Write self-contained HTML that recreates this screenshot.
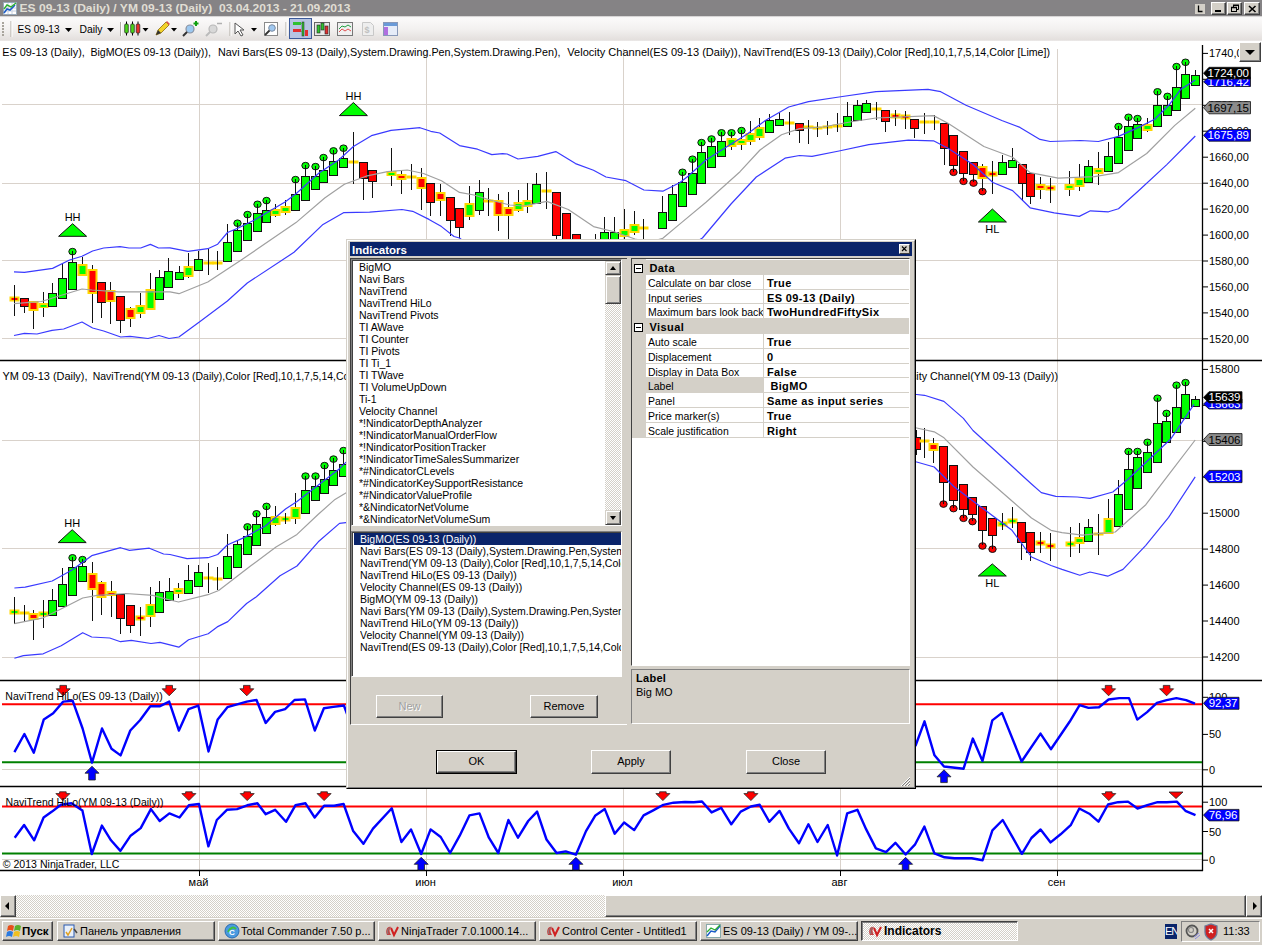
<!DOCTYPE html>
<html><head><meta charset="utf-8">
<style>
*{box-sizing:border-box;margin:0;padding:0}
html,body{width:1262px;height:945px;overflow:hidden;background:#fff;font-family:"Liberation Sans",sans-serif;font-size:11px;color:#000}
.abs{position:absolute}
#title{left:0;top:0;width:1262px;height:16px;background:#858385}
#title .t{left:19px;top:1px;font-weight:bold;font-size:11.5px;color:#e2e0d6;white-space:nowrap;letter-spacing:0.1px}
.wbtn{background:#d4d0c8;border:1px solid;border-color:#fff #404040 #404040 #fff;box-shadow:inset -1px -1px #808080}
#tool{left:0;top:16px;width:1262px;height:25px;background:linear-gradient(#b8b6b6 0,#f6f5f5 1px,#fbfafa 8%,#f2f0ef 55%,#e3dfdd 96%,#f0eeee 100%)}
.sep{width:1px;background:#b8b4ac;height:14px;top:6px}
.dd{width:0;height:0;border-left:3px solid transparent;border-right:3px solid transparent;border-top:3px solid #000}
#dlg{left:346px;top:239px;width:570px;height:550px;background:#d4d0c8;border:1px solid;border-color:#d4d0c8 #000 #000 #d4d0c8}
#dlg .in{position:absolute;left:0;top:0;right:0;bottom:0;border:1px solid;border-color:#fff #808080 #808080 #fff}
.list{background:#fff;border:2px solid;border-color:#808080 #fff #fff #808080;box-shadow:inset 1px 1px #404040}
.li{position:absolute;left:5px;white-space:nowrap;font-size:11px;line-height:12px;height:12px}
.btn{position:absolute;background:#d4d0c8;border:1px solid;border-color:#fff #404040 #404040 #fff;box-shadow:inset -1px -1px #808080;text-align:center;font-size:11px;line-height:20px}
.pg{font-size:11px}
.row{position:absolute;left:15px;width:262px;height:15px;border-bottom:1px solid #d4d0c8;background:#fff}
.row .n{position:absolute;left:2px;top:1px;white-space:nowrap;overflow:hidden;width:114px}
.row .v{position:absolute;left:117px;top:0;height:14px;width:146px;border-left:1px solid #d4d0c8;padding-left:4px;padding-top:1px;font-weight:bold;white-space:nowrap}
.cat{position:absolute;left:0;width:278px;height:15px;background:#d4d0c8;font-weight:bold}
.minus{position:absolute;left:3px;top:3px;width:9px;height:9px;border:1px solid #000;background:#fff}
.minus:after{content:"";position:absolute;left:1px;top:3px;width:5px;height:1px;background:#000}
#scroll{left:0;top:895px;width:1262px;height:22px;background-color:#eeece8;background-image:repeating-conic-gradient(#d4d0c8 0 25%, #fff 0 50%);background-size:2px 2px}
#task{left:0;top:917px;width:1262px;height:28px;background:#d4d0c8}
.tb{position:absolute;top:4px;height:20px;background:#d4d0c8;border:1px solid;border-color:#fff #404040 #404040 #fff;box-shadow:inset -1px -1px #808080;white-space:nowrap;overflow:hidden;font-size:11px;line-height:18px;padding-left:22px}
</style></head><body>
<svg width="1262" height="945" viewBox="0 0 1262 945" style="position:absolute;left:0;top:0">
<line x1="2" y1="104.5" x2="1202" y2="104.5" stroke="#d9d2cb" stroke-width="1"/>
<line x1="2" y1="183.5" x2="1202" y2="183.5" stroke="#d9d2cb" stroke-width="1"/>
<line x1="2" y1="260.5" x2="1202" y2="260.5" stroke="#d9d2cb" stroke-width="1"/>
<line x1="2" y1="338.5" x2="1202" y2="338.5" stroke="#d9d2cb" stroke-width="1"/>
<line x1="2" y1="440.5" x2="1202" y2="440.5" stroke="#d9d2cb" stroke-width="1"/>
<line x1="2" y1="548.5" x2="1202" y2="548.5" stroke="#d9d2cb" stroke-width="1"/>
<line x1="2" y1="657.5" x2="1202" y2="657.5" stroke="#d9d2cb" stroke-width="1"/>
<line x1="2" y1="769.5" x2="1202" y2="769.5" stroke="#d9d2cb" stroke-width="1"/>
<line x1="2" y1="859.5" x2="1202" y2="859.5" stroke="#d9d2cb" stroke-width="1"/>
<line x1="199.5" y1="49" x2="199.5" y2="870" stroke="#d9d2cb" stroke-width="1"/>
<line x1="426.5" y1="49" x2="426.5" y2="870" stroke="#d9d2cb" stroke-width="1"/>
<line x1="623.5" y1="49" x2="623.5" y2="870" stroke="#d9d2cb" stroke-width="1"/>
<line x1="840.5" y1="49" x2="840.5" y2="870" stroke="#d9d2cb" stroke-width="1"/>
<line x1="1057.5" y1="49" x2="1057.5" y2="870" stroke="#d9d2cb" stroke-width="1"/>
<line x1="0" y1="360.5" x2="1262" y2="360.5" stroke="#000" stroke-width="1.3"/>
<line x1="0" y1="680.5" x2="1262" y2="680.5" stroke="#000" stroke-width="1.3"/>
<line x1="0" y1="786.5" x2="1262" y2="786.5" stroke="#000" stroke-width="1.3"/>
<line x1="0" y1="870.5" x2="1203" y2="870.5" stroke="#000" stroke-width="1.3"/>
<line x1="1202.5" y1="45" x2="1202.5" y2="871" stroke="#000" stroke-width="1.3"/>
<line x1="199.5" y1="870" x2="199.5" y2="876" stroke="#000" stroke-width="1"/>
<text x="198.5" y="886" text-anchor="middle" font-size="11" font-family="Liberation Sans, sans-serif">май</text>
<line x1="426.5" y1="870" x2="426.5" y2="876" stroke="#000" stroke-width="1"/>
<text x="425.5" y="886" text-anchor="middle" font-size="11" font-family="Liberation Sans, sans-serif">июн</text>
<line x1="623.5" y1="870" x2="623.5" y2="876" stroke="#000" stroke-width="1"/>
<text x="622.5" y="886" text-anchor="middle" font-size="11" font-family="Liberation Sans, sans-serif">июл</text>
<line x1="840.5" y1="870" x2="840.5" y2="876" stroke="#000" stroke-width="1"/>
<text x="839.5" y="886" text-anchor="middle" font-size="11" font-family="Liberation Sans, sans-serif">авг</text>
<line x1="1057.5" y1="870" x2="1057.5" y2="876" stroke="#000" stroke-width="1"/>
<text x="1056.5" y="886" text-anchor="middle" font-size="11" font-family="Liberation Sans, sans-serif">сен</text>
<line x1="1203" y1="53.4" x2="1208" y2="53.4" stroke="#000" stroke-width="1"/>
<text x="1209" y="57.4" font-size="11" font-family="Liberation Sans, sans-serif">1740,00</text>
<line x1="1203" y1="79.3" x2="1208" y2="79.3" stroke="#000" stroke-width="1"/>
<text x="1209" y="83.3" font-size="11" font-family="Liberation Sans, sans-serif">1720,00</text>
<line x1="1203" y1="105.3" x2="1208" y2="105.3" stroke="#000" stroke-width="1"/>
<text x="1209" y="109.3" font-size="11" font-family="Liberation Sans, sans-serif">1700,00</text>
<line x1="1203" y1="131.2" x2="1208" y2="131.2" stroke="#000" stroke-width="1"/>
<text x="1209" y="135.2" font-size="11" font-family="Liberation Sans, sans-serif">1680,00</text>
<line x1="1203" y1="157.2" x2="1208" y2="157.2" stroke="#000" stroke-width="1"/>
<text x="1209" y="161.2" font-size="11" font-family="Liberation Sans, sans-serif">1660,00</text>
<line x1="1203" y1="183.2" x2="1208" y2="183.2" stroke="#000" stroke-width="1"/>
<text x="1209" y="187.2" font-size="11" font-family="Liberation Sans, sans-serif">1640,00</text>
<line x1="1203" y1="209.1" x2="1208" y2="209.1" stroke="#000" stroke-width="1"/>
<text x="1209" y="213.1" font-size="11" font-family="Liberation Sans, sans-serif">1620,00</text>
<line x1="1203" y1="235.1" x2="1208" y2="235.1" stroke="#000" stroke-width="1"/>
<text x="1209" y="239.1" font-size="11" font-family="Liberation Sans, sans-serif">1600,00</text>
<line x1="1203" y1="261.0" x2="1208" y2="261.0" stroke="#000" stroke-width="1"/>
<text x="1209" y="265.0" font-size="11" font-family="Liberation Sans, sans-serif">1580,00</text>
<line x1="1203" y1="286.9" x2="1208" y2="286.9" stroke="#000" stroke-width="1"/>
<text x="1209" y="290.9" font-size="11" font-family="Liberation Sans, sans-serif">1560,00</text>
<line x1="1203" y1="312.9" x2="1208" y2="312.9" stroke="#000" stroke-width="1"/>
<text x="1209" y="316.9" font-size="11" font-family="Liberation Sans, sans-serif">1540,00</text>
<line x1="1203" y1="338.8" x2="1208" y2="338.8" stroke="#000" stroke-width="1"/>
<text x="1209" y="342.8" font-size="11" font-family="Liberation Sans, sans-serif">1520,00</text>
<line x1="1203" y1="369.4" x2="1208" y2="369.4" stroke="#000" stroke-width="1"/>
<text x="1209" y="373.4" font-size="11" font-family="Liberation Sans, sans-serif">15800</text>
<line x1="1203" y1="405.3" x2="1208" y2="405.3" stroke="#000" stroke-width="1"/>
<text x="1209" y="409.3" font-size="11" font-family="Liberation Sans, sans-serif">15600</text>
<line x1="1203" y1="441.3" x2="1208" y2="441.3" stroke="#000" stroke-width="1"/>
<text x="1209" y="445.3" font-size="11" font-family="Liberation Sans, sans-serif">15400</text>
<line x1="1203" y1="477.2" x2="1208" y2="477.2" stroke="#000" stroke-width="1"/>
<text x="1209" y="481.2" font-size="11" font-family="Liberation Sans, sans-serif">15200</text>
<line x1="1203" y1="513.2" x2="1208" y2="513.2" stroke="#000" stroke-width="1"/>
<text x="1209" y="517.2" font-size="11" font-family="Liberation Sans, sans-serif">15000</text>
<line x1="1203" y1="549.1" x2="1208" y2="549.1" stroke="#000" stroke-width="1"/>
<text x="1209" y="553.1" font-size="11" font-family="Liberation Sans, sans-serif">14800</text>
<line x1="1203" y1="585.1" x2="1208" y2="585.1" stroke="#000" stroke-width="1"/>
<text x="1209" y="589.1" font-size="11" font-family="Liberation Sans, sans-serif">14600</text>
<line x1="1203" y1="621.0" x2="1208" y2="621.0" stroke="#000" stroke-width="1"/>
<text x="1209" y="625.0" font-size="11" font-family="Liberation Sans, sans-serif">14400</text>
<line x1="1203" y1="657.0" x2="1208" y2="657.0" stroke="#000" stroke-width="1"/>
<text x="1209" y="661.0" font-size="11" font-family="Liberation Sans, sans-serif">14200</text>
<line x1="1203" y1="697.3" x2="1208" y2="697.3" stroke="#000" stroke-width="1"/>
<text x="1209" y="701.3" font-size="11" font-family="Liberation Sans, sans-serif">100</text>
<line x1="1203" y1="734.4" x2="1208" y2="734.4" stroke="#000" stroke-width="1"/>
<text x="1209" y="738.4" font-size="11" font-family="Liberation Sans, sans-serif">50</text>
<line x1="1203" y1="769.8" x2="1208" y2="769.8" stroke="#000" stroke-width="1"/>
<text x="1209" y="773.8" font-size="11" font-family="Liberation Sans, sans-serif">0</text>
<line x1="1203" y1="802.2" x2="1208" y2="802.2" stroke="#000" stroke-width="1"/>
<text x="1209" y="806.2" font-size="11" font-family="Liberation Sans, sans-serif">100</text>
<line x1="1203" y1="831.5" x2="1208" y2="831.5" stroke="#000" stroke-width="1"/>
<text x="1209" y="835.5" font-size="11" font-family="Liberation Sans, sans-serif">50</text>
<line x1="1203" y1="860.2" x2="1208" y2="860.2" stroke="#000" stroke-width="1"/>
<text x="1209" y="864.2" font-size="11" font-family="Liberation Sans, sans-serif">0</text>
<rect x="9.5" y="296.5" width="10" height="5" fill="#ffd700"/>
<rect x="11.5" y="298" width="6" height="2" fill="#ff0000"/>
<line x1="14.5" y1="285" x2="14.5" y2="316" stroke="#111" stroke-width="1"/>
<line x1="24.5" y1="298" x2="24.5" y2="313" stroke="#111" stroke-width="1"/>
<rect x="20.5" y="298.5" width="8" height="8" fill="#ff0000" stroke="#111" stroke-width="1"/>
<line x1="33.5" y1="302" x2="33.5" y2="329" stroke="#111" stroke-width="1"/>
<rect x="28.5" y="301" width="10" height="10" fill="#ffd700"/>
<rect x="30.5" y="303" width="6" height="6" fill="#ff0000"/>
<line x1="43.5" y1="292" x2="43.5" y2="317" stroke="#111" stroke-width="1"/>
<rect x="38.5" y="303" width="10" height="5" fill="#ffd700"/>
<rect x="40.5" y="305" width="6" height="2" fill="#00ff00"/>
<line x1="52.5" y1="283" x2="52.5" y2="306" stroke="#111" stroke-width="1"/>
<rect x="48.5" y="293.5" width="8" height="13" fill="#00ff00" stroke="#111" stroke-width="1"/>
<line x1="62.5" y1="264" x2="62.5" y2="298" stroke="#111" stroke-width="1"/>
<rect x="58.5" y="278.5" width="8" height="20" fill="#00ff00" stroke="#111" stroke-width="1"/>
<ellipse cx="72.5" cy="251.6" rx="3.7" ry="3.3" fill="#00ff00" stroke="#111" stroke-width="1"/>
<line x1="72.5" y1="251" x2="72.5" y2="289" stroke="#111" stroke-width="1"/>
<rect x="68.5" y="262.5" width="8" height="27" fill="#00ff00" stroke="#111" stroke-width="1"/>
<line x1="82.5" y1="257" x2="82.5" y2="275" stroke="#111" stroke-width="1"/>
<rect x="77.5" y="264" width="10" height="12" fill="#ffd700"/>
<rect x="79.5" y="266" width="6" height="8" fill="#00ff00"/>
<line x1="92.5" y1="265" x2="92.5" y2="323" stroke="#111" stroke-width="1"/>
<rect x="87.5" y="269" width="10" height="25" fill="#ffd700"/>
<rect x="89.5" y="271" width="6" height="21" fill="#ff0000"/>
<line x1="101.5" y1="282" x2="101.5" y2="318" stroke="#111" stroke-width="1"/>
<rect x="97.5" y="282.5" width="8" height="20" fill="#ff0000" stroke="#111" stroke-width="1"/>
<line x1="110.5" y1="282" x2="110.5" y2="324" stroke="#111" stroke-width="1"/>
<rect x="105.5" y="290" width="10" height="12" fill="#ffd700"/>
<rect x="107.5" y="292" width="6" height="8" fill="#ff0000"/>
<line x1="120.5" y1="296" x2="120.5" y2="333" stroke="#111" stroke-width="1"/>
<rect x="116.5" y="296.5" width="8" height="24" fill="#ff0000" stroke="#111" stroke-width="1"/>
<line x1="130.5" y1="307" x2="130.5" y2="327" stroke="#111" stroke-width="1"/>
<rect x="125.5" y="308" width="10" height="11" fill="#ffd700"/>
<rect x="127.5" y="310" width="6" height="7" fill="#ff0000"/>
<line x1="140.5" y1="293" x2="140.5" y2="318" stroke="#111" stroke-width="1"/>
<rect x="135.5" y="305" width="10" height="9" fill="#ffd700"/>
<rect x="137.5" y="307" width="6" height="5" fill="#00ff00"/>
<line x1="150.5" y1="273" x2="150.5" y2="309" stroke="#111" stroke-width="1"/>
<rect x="145.5" y="289" width="10" height="21" fill="#ffd700"/>
<rect x="147.5" y="291" width="6" height="17" fill="#00ff00"/>
<line x1="159.5" y1="270" x2="159.5" y2="299" stroke="#111" stroke-width="1"/>
<rect x="155.5" y="277.5" width="8" height="22" fill="#00ff00" stroke="#111" stroke-width="1"/>
<line x1="168.5" y1="258" x2="168.5" y2="287" stroke="#111" stroke-width="1"/>
<rect x="164.5" y="271.5" width="8" height="16" fill="#00ff00" stroke="#111" stroke-width="1"/>
<line x1="179.5" y1="266" x2="179.5" y2="279" stroke="#111" stroke-width="1"/>
<rect x="175.5" y="272.5" width="8" height="7" fill="#00ff00" stroke="#111" stroke-width="1"/>
<line x1="188.5" y1="253" x2="188.5" y2="278" stroke="#111" stroke-width="1"/>
<rect x="183.5" y="266" width="10" height="11" fill="#ffd700"/>
<rect x="185.5" y="268" width="6" height="7" fill="#00ff00"/>
<line x1="198.5" y1="251" x2="198.5" y2="270" stroke="#111" stroke-width="1"/>
<rect x="194.5" y="259.5" width="8" height="11" fill="#00ff00" stroke="#111" stroke-width="1"/>
<rect x="203.5" y="261.5" width="10" height="3" fill="#ffd700"/>
<line x1="208.5" y1="249" x2="208.5" y2="275" stroke="#111" stroke-width="1"/>
<rect x="212.5" y="261.5" width="10" height="3" fill="#ffd700"/>
<line x1="217.5" y1="251" x2="217.5" y2="270" stroke="#111" stroke-width="1"/>
<line x1="227.5" y1="224" x2="227.5" y2="261" stroke="#111" stroke-width="1"/>
<rect x="223.5" y="242.5" width="8" height="19" fill="#00ff00" stroke="#111" stroke-width="1"/>
<ellipse cx="237.5" cy="223.2" rx="3.7" ry="3.3" fill="#00ff00" stroke="#111" stroke-width="1"/>
<line x1="237.5" y1="223" x2="237.5" y2="251" stroke="#111" stroke-width="1"/>
<rect x="233.5" y="230.5" width="8" height="21" fill="#00ff00" stroke="#111" stroke-width="1"/>
<ellipse cx="247.5" cy="214.6" rx="3.7" ry="3.3" fill="#00ff00" stroke="#111" stroke-width="1"/>
<line x1="247.5" y1="214" x2="247.5" y2="240" stroke="#111" stroke-width="1"/>
<rect x="243.5" y="223.5" width="8" height="17" fill="#00ff00" stroke="#111" stroke-width="1"/>
<ellipse cx="257.5" cy="204.3" rx="3.7" ry="3.3" fill="#00ff00" stroke="#111" stroke-width="1"/>
<line x1="257.5" y1="204" x2="257.5" y2="231" stroke="#111" stroke-width="1"/>
<rect x="253.5" y="213.5" width="8" height="18" fill="#00ff00" stroke="#111" stroke-width="1"/>
<ellipse cx="266.5" cy="200.6" rx="3.7" ry="3.3" fill="#00ff00" stroke="#111" stroke-width="1"/>
<line x1="266.5" y1="200" x2="266.5" y2="222" stroke="#111" stroke-width="1"/>
<rect x="262.5" y="210.5" width="8" height="12" fill="#00ff00" stroke="#111" stroke-width="1"/>
<line x1="275.5" y1="204" x2="275.5" y2="217" stroke="#111" stroke-width="1"/>
<rect x="270.5" y="209" width="10" height="7" fill="#ffd700"/>
<rect x="272.5" y="211" width="6" height="3" fill="#00ff00"/>
<line x1="285.5" y1="200" x2="285.5" y2="215" stroke="#111" stroke-width="1"/>
<rect x="280.5" y="206" width="10" height="7" fill="#ffd700"/>
<rect x="282.5" y="208" width="6" height="3" fill="#00ff00"/>
<ellipse cx="295.5" cy="179.6" rx="3.7" ry="3.3" fill="#00ff00" stroke="#111" stroke-width="1"/>
<line x1="295.5" y1="179" x2="295.5" y2="210" stroke="#111" stroke-width="1"/>
<rect x="291.5" y="194.5" width="8" height="16" fill="#00ff00" stroke="#111" stroke-width="1"/>
<ellipse cx="305.5" cy="165.6" rx="3.7" ry="3.3" fill="#00ff00" stroke="#111" stroke-width="1"/>
<line x1="305.5" y1="165" x2="305.5" y2="200" stroke="#111" stroke-width="1"/>
<rect x="301.5" y="176.5" width="8" height="24" fill="#00ff00" stroke="#111" stroke-width="1"/>
<ellipse cx="315.5" cy="166.6" rx="3.7" ry="3.3" fill="#00ff00" stroke="#111" stroke-width="1"/>
<line x1="315.5" y1="166" x2="315.5" y2="189" stroke="#111" stroke-width="1"/>
<rect x="311.5" y="176.5" width="8" height="13" fill="#00ff00" stroke="#111" stroke-width="1"/>
<ellipse cx="323.5" cy="157.6" rx="3.7" ry="3.3" fill="#00ff00" stroke="#111" stroke-width="1"/>
<line x1="323.5" y1="157" x2="323.5" y2="182" stroke="#111" stroke-width="1"/>
<rect x="319.5" y="170.5" width="8" height="12" fill="#00ff00" stroke="#111" stroke-width="1"/>
<ellipse cx="333.5" cy="150.9" rx="3.7" ry="3.3" fill="#00ff00" stroke="#111" stroke-width="1"/>
<line x1="333.5" y1="150" x2="333.5" y2="175" stroke="#111" stroke-width="1"/>
<rect x="329.5" y="161.5" width="8" height="14" fill="#00ff00" stroke="#111" stroke-width="1"/>
<ellipse cx="343.5" cy="148.2" rx="3.7" ry="3.3" fill="#00ff00" stroke="#111" stroke-width="1"/>
<line x1="343.5" y1="148" x2="343.5" y2="167" stroke="#111" stroke-width="1"/>
<rect x="339.5" y="158.5" width="8" height="9" fill="#00ff00" stroke="#111" stroke-width="1"/>
<rect x="348.5" y="160.5" width="10" height="3" fill="#ffd700"/>
<line x1="353.5" y1="132" x2="353.5" y2="184" stroke="#111" stroke-width="1"/>
<line x1="363.5" y1="162" x2="363.5" y2="200" stroke="#111" stroke-width="1"/>
<rect x="359.5" y="162.5" width="8" height="16" fill="#ff0000" stroke="#111" stroke-width="1"/>
<line x1="372.5" y1="170" x2="372.5" y2="198" stroke="#111" stroke-width="1"/>
<rect x="368.5" y="170.5" width="8" height="11" fill="#ff0000" stroke="#111" stroke-width="1"/>
<line x1="391.5" y1="148" x2="391.5" y2="186" stroke="#111" stroke-width="1"/>
<rect x="386.5" y="171" width="10" height="5" fill="#ffd700"/>
<rect x="388.5" y="173" width="6" height="2" fill="#00ff00"/>
<line x1="401.5" y1="170" x2="401.5" y2="194" stroke="#111" stroke-width="1"/>
<rect x="396.5" y="174" width="10" height="6" fill="#ffd700"/>
<rect x="398.5" y="176" width="6" height="2" fill="#ff0000"/>
<rect x="406.5" y="175.5" width="10" height="3" fill="#ffd700"/>
<line x1="411.5" y1="164" x2="411.5" y2="190" stroke="#111" stroke-width="1"/>
<line x1="421.5" y1="168" x2="421.5" y2="210" stroke="#111" stroke-width="1"/>
<rect x="416.5" y="177" width="10" height="12" fill="#ffd700"/>
<rect x="418.5" y="179" width="6" height="8" fill="#ff0000"/>
<line x1="430.5" y1="183" x2="430.5" y2="216" stroke="#111" stroke-width="1"/>
<rect x="426.5" y="183.5" width="8" height="19" fill="#ff0000" stroke="#111" stroke-width="1"/>
<line x1="440.5" y1="184" x2="440.5" y2="216" stroke="#111" stroke-width="1"/>
<rect x="435.5" y="192" width="10" height="9" fill="#ffd700"/>
<rect x="437.5" y="194" width="6" height="5" fill="#ff0000"/>
<line x1="450.5" y1="197" x2="450.5" y2="236" stroke="#111" stroke-width="1"/>
<rect x="446.5" y="197.5" width="8" height="23" fill="#ff0000" stroke="#111" stroke-width="1"/>
<line x1="459.5" y1="208" x2="459.5" y2="238" stroke="#111" stroke-width="1"/>
<rect x="455.5" y="208.5" width="8" height="19" fill="#ff0000" stroke="#111" stroke-width="1"/>
<line x1="469.5" y1="186" x2="469.5" y2="220" stroke="#111" stroke-width="1"/>
<rect x="464.5" y="203" width="10" height="14" fill="#ffd700"/>
<rect x="466.5" y="205" width="6" height="10" fill="#00ff00"/>
<line x1="479.5" y1="180" x2="479.5" y2="215" stroke="#111" stroke-width="1"/>
<rect x="475.5" y="192.5" width="8" height="18" fill="#00ff00" stroke="#111" stroke-width="1"/>
<rect x="483.5" y="199.5" width="10" height="3" fill="#ffd700"/>
<line x1="488.5" y1="188" x2="488.5" y2="216" stroke="#111" stroke-width="1"/>
<line x1="498.5" y1="194" x2="498.5" y2="231" stroke="#111" stroke-width="1"/>
<rect x="493.5" y="200" width="10" height="16" fill="#ffd700"/>
<rect x="495.5" y="202" width="6" height="12" fill="#ff0000"/>
<line x1="508.5" y1="192" x2="508.5" y2="239" stroke="#111" stroke-width="1"/>
<rect x="503.5" y="207" width="10" height="9" fill="#ffd700"/>
<rect x="505.5" y="209" width="6" height="5" fill="#ff0000"/>
<line x1="518.5" y1="190" x2="518.5" y2="212" stroke="#111" stroke-width="1"/>
<rect x="513.5" y="202" width="10" height="9" fill="#ffd700"/>
<rect x="515.5" y="204" width="6" height="5" fill="#00ff00"/>
<line x1="527.5" y1="183" x2="527.5" y2="213" stroke="#111" stroke-width="1"/>
<rect x="522.5" y="200" width="10" height="7" fill="#ffd700"/>
<rect x="524.5" y="202" width="6" height="3" fill="#00ff00"/>
<line x1="536.5" y1="173" x2="536.5" y2="203" stroke="#111" stroke-width="1"/>
<rect x="532.5" y="184.5" width="8" height="19" fill="#00ff00" stroke="#111" stroke-width="1"/>
<rect x="541.5" y="189.5" width="10" height="3" fill="#ffd700"/>
<line x1="546.5" y1="172" x2="546.5" y2="209" stroke="#111" stroke-width="1"/>
<line x1="556.5" y1="192" x2="556.5" y2="245" stroke="#111" stroke-width="1"/>
<rect x="552.5" y="192.5" width="8" height="43" fill="#ff0000" stroke="#111" stroke-width="1"/>
<line x1="566.5" y1="213" x2="566.5" y2="260" stroke="#111" stroke-width="1"/>
<rect x="562.5" y="213.5" width="8" height="42" fill="#ff0000" stroke="#111" stroke-width="1"/>
<line x1="576.5" y1="234" x2="576.5" y2="270" stroke="#111" stroke-width="1"/>
<rect x="572.5" y="234.5" width="8" height="28" fill="#ff0000" stroke="#111" stroke-width="1"/>
<line x1="595.5" y1="234" x2="595.5" y2="270" stroke="#111" stroke-width="1"/>
<rect x="591.5" y="245.5" width="8" height="15" fill="#ff0000" stroke="#111" stroke-width="1"/>
<line x1="604.5" y1="217" x2="604.5" y2="250" stroke="#111" stroke-width="1"/>
<rect x="600.5" y="232.5" width="8" height="16" fill="#00ff00" stroke="#111" stroke-width="1"/>
<line x1="614.5" y1="217" x2="614.5" y2="250" stroke="#111" stroke-width="1"/>
<rect x="610.5" y="232.5" width="8" height="16" fill="#00ff00" stroke="#111" stroke-width="1"/>
<line x1="624.5" y1="209" x2="624.5" y2="239" stroke="#111" stroke-width="1"/>
<rect x="619.5" y="229" width="10" height="8" fill="#ffd700"/>
<rect x="621.5" y="231" width="6" height="4" fill="#00ff00"/>
<line x1="634.5" y1="211" x2="634.5" y2="235" stroke="#111" stroke-width="1"/>
<rect x="629.5" y="224" width="10" height="9" fill="#ffd700"/>
<rect x="631.5" y="226" width="6" height="5" fill="#00ff00"/>
<rect x="638.5" y="226.5" width="10" height="3" fill="#ffd700"/>
<line x1="643.5" y1="219" x2="643.5" y2="239" stroke="#111" stroke-width="1"/>
<line x1="662.5" y1="196" x2="662.5" y2="228" stroke="#111" stroke-width="1"/>
<rect x="658.5" y="212.5" width="8" height="16" fill="#00ff00" stroke="#111" stroke-width="1"/>
<line x1="672.5" y1="185" x2="672.5" y2="220" stroke="#111" stroke-width="1"/>
<rect x="668.5" y="194.5" width="8" height="26" fill="#00ff00" stroke="#111" stroke-width="1"/>
<ellipse cx="682.5" cy="172.3" rx="3.7" ry="3.3" fill="#00ff00" stroke="#111" stroke-width="1"/>
<line x1="682.5" y1="172" x2="682.5" y2="206" stroke="#111" stroke-width="1"/>
<rect x="678.5" y="182.5" width="8" height="24" fill="#00ff00" stroke="#111" stroke-width="1"/>
<ellipse cx="692.5" cy="159.2" rx="3.7" ry="3.3" fill="#00ff00" stroke="#111" stroke-width="1"/>
<line x1="692.5" y1="159" x2="692.5" y2="194" stroke="#111" stroke-width="1"/>
<rect x="688.5" y="173.5" width="8" height="21" fill="#00ff00" stroke="#111" stroke-width="1"/>
<ellipse cx="701.5" cy="142.6" rx="3.7" ry="3.3" fill="#00ff00" stroke="#111" stroke-width="1"/>
<line x1="701.5" y1="142" x2="701.5" y2="183" stroke="#111" stroke-width="1"/>
<rect x="697.5" y="152.5" width="8" height="31" fill="#00ff00" stroke="#111" stroke-width="1"/>
<ellipse cx="711.5" cy="139.0" rx="3.7" ry="3.3" fill="#00ff00" stroke="#111" stroke-width="1"/>
<line x1="711.5" y1="138" x2="711.5" y2="167" stroke="#111" stroke-width="1"/>
<rect x="707.5" y="146.5" width="8" height="21" fill="#00ff00" stroke="#111" stroke-width="1"/>
<ellipse cx="721.5" cy="132.8" rx="3.7" ry="3.3" fill="#00ff00" stroke="#111" stroke-width="1"/>
<line x1="721.5" y1="132" x2="721.5" y2="156" stroke="#111" stroke-width="1"/>
<rect x="717.5" y="141.5" width="8" height="15" fill="#00ff00" stroke="#111" stroke-width="1"/>
<ellipse cx="731.5" cy="132.8" rx="3.7" ry="3.3" fill="#00ff00" stroke="#111" stroke-width="1"/>
<line x1="731.5" y1="132" x2="731.5" y2="150" stroke="#111" stroke-width="1"/>
<rect x="726.5" y="138" width="10" height="9" fill="#ffd700"/>
<rect x="728.5" y="140" width="6" height="5" fill="#00ff00"/>
<ellipse cx="741.5" cy="130.6" rx="3.7" ry="3.3" fill="#00ff00" stroke="#111" stroke-width="1"/>
<line x1="741.5" y1="130" x2="741.5" y2="150" stroke="#111" stroke-width="1"/>
<rect x="736.5" y="139" width="10" height="6" fill="#ffd700"/>
<rect x="738.5" y="141" width="6" height="2" fill="#00ff00"/>
<line x1="750.5" y1="121" x2="750.5" y2="145" stroke="#111" stroke-width="1"/>
<rect x="745.5" y="133" width="10" height="9" fill="#ffd700"/>
<rect x="747.5" y="135" width="6" height="5" fill="#00ff00"/>
<line x1="759.5" y1="118" x2="759.5" y2="140" stroke="#111" stroke-width="1"/>
<rect x="754.5" y="127" width="10" height="11" fill="#ffd700"/>
<rect x="756.5" y="129" width="6" height="7" fill="#00ff00"/>
<line x1="769.5" y1="114" x2="769.5" y2="132" stroke="#111" stroke-width="1"/>
<rect x="765.5" y="120.5" width="8" height="12" fill="#00ff00" stroke="#111" stroke-width="1"/>
<line x1="779.5" y1="113" x2="779.5" y2="125" stroke="#111" stroke-width="1"/>
<rect x="775.5" y="119.5" width="8" height="6" fill="#00ff00" stroke="#111" stroke-width="1"/>
<rect x="784.5" y="121.5" width="10" height="3" fill="#ffd700"/>
<line x1="789.5" y1="112" x2="789.5" y2="135" stroke="#111" stroke-width="1"/>
<line x1="799.5" y1="123" x2="799.5" y2="143" stroke="#111" stroke-width="1"/>
<rect x="795.5" y="123.5" width="8" height="7" fill="#ff0000" stroke="#111" stroke-width="1"/>
<rect x="803.5" y="125.5" width="10" height="3" fill="#ffd700"/>
<line x1="808.5" y1="120" x2="808.5" y2="144" stroke="#111" stroke-width="1"/>
<rect x="812.5" y="126.5" width="10" height="3" fill="#ffd700"/>
<line x1="817.5" y1="122" x2="817.5" y2="137" stroke="#111" stroke-width="1"/>
<rect x="822.5" y="125.5" width="10" height="3" fill="#ffd700"/>
<line x1="827.5" y1="121" x2="827.5" y2="135" stroke="#111" stroke-width="1"/>
<rect x="832.5" y="124.5" width="10" height="3" fill="#ffd700"/>
<line x1="837.5" y1="113" x2="837.5" y2="132" stroke="#111" stroke-width="1"/>
<line x1="847.5" y1="102" x2="847.5" y2="126" stroke="#111" stroke-width="1"/>
<rect x="843.5" y="116.5" width="8" height="10" fill="#00ff00" stroke="#111" stroke-width="1"/>
<line x1="857.5" y1="100" x2="857.5" y2="120" stroke="#111" stroke-width="1"/>
<rect x="853.5" y="105.5" width="8" height="15" fill="#00ff00" stroke="#111" stroke-width="1"/>
<line x1="866.5" y1="100" x2="866.5" y2="112" stroke="#111" stroke-width="1"/>
<rect x="862.5" y="103.5" width="8" height="9" fill="#00ff00" stroke="#111" stroke-width="1"/>
<rect x="871.5" y="107.5" width="10" height="3" fill="#ffd700"/>
<line x1="876.5" y1="102" x2="876.5" y2="120" stroke="#111" stroke-width="1"/>
<line x1="885.5" y1="110" x2="885.5" y2="132" stroke="#111" stroke-width="1"/>
<rect x="881.5" y="110.5" width="8" height="11" fill="#ff0000" stroke="#111" stroke-width="1"/>
<rect x="890.5" y="113.5" width="10" height="5" fill="#ffd700"/>
<rect x="892.5" y="115" width="6" height="2" fill="#ff0000"/>
<line x1="895.5" y1="110" x2="895.5" y2="126" stroke="#111" stroke-width="1"/>
<rect x="900.5" y="114.5" width="10" height="5" fill="#ffd700"/>
<rect x="902.5" y="116" width="6" height="2" fill="#ff0000"/>
<line x1="905.5" y1="111" x2="905.5" y2="129" stroke="#111" stroke-width="1"/>
<line x1="914.5" y1="119" x2="914.5" y2="138" stroke="#111" stroke-width="1"/>
<rect x="910.5" y="119.5" width="8" height="9" fill="#ff0000" stroke="#111" stroke-width="1"/>
<rect x="919.5" y="120.5" width="10" height="3" fill="#ffd700"/>
<line x1="924.5" y1="113" x2="924.5" y2="134" stroke="#111" stroke-width="1"/>
<rect x="929.5" y="120.5" width="10" height="3" fill="#ffd700"/>
<line x1="934.5" y1="115" x2="934.5" y2="130" stroke="#111" stroke-width="1"/>
<line x1="944.5" y1="123" x2="944.5" y2="165" stroke="#111" stroke-width="1"/>
<rect x="940.5" y="123.5" width="8" height="25" fill="#ff0000" stroke="#111" stroke-width="1"/>
<ellipse cx="953.5" cy="172.3" rx="3.7" ry="3.3" fill="#ff0000" stroke="#111" stroke-width="1"/>
<line x1="953.5" y1="135" x2="953.5" y2="172" stroke="#111" stroke-width="1"/>
<rect x="949.5" y="135.5" width="8" height="30" fill="#ff0000" stroke="#111" stroke-width="1"/>
<ellipse cx="963.5" cy="181.3" rx="3.7" ry="3.3" fill="#ff0000" stroke="#111" stroke-width="1"/>
<line x1="963.5" y1="151" x2="963.5" y2="181" stroke="#111" stroke-width="1"/>
<rect x="959.5" y="151.5" width="8" height="22" fill="#ff0000" stroke="#111" stroke-width="1"/>
<ellipse cx="973.5" cy="183.1" rx="3.7" ry="3.3" fill="#ff0000" stroke="#111" stroke-width="1"/>
<line x1="973.5" y1="162" x2="973.5" y2="182" stroke="#111" stroke-width="1"/>
<rect x="969.5" y="162.5" width="8" height="12" fill="#ff0000" stroke="#111" stroke-width="1"/>
<ellipse cx="982.5" cy="191.6" rx="3.7" ry="3.3" fill="#ff0000" stroke="#111" stroke-width="1"/>
<line x1="982.5" y1="164" x2="982.5" y2="191" stroke="#111" stroke-width="1"/>
<rect x="977.5" y="166" width="10" height="13" fill="#ffd700"/>
<rect x="979.5" y="168" width="6" height="9" fill="#ff0000"/>
<rect x="987.5" y="171.5" width="10" height="5" fill="#ffd700"/>
<rect x="989.5" y="173" width="6" height="2" fill="#ff0000"/>
<line x1="992.5" y1="161" x2="992.5" y2="194" stroke="#111" stroke-width="1"/>
<line x1="1002.5" y1="155" x2="1002.5" y2="174" stroke="#111" stroke-width="1"/>
<rect x="998.5" y="162.5" width="8" height="12" fill="#00ff00" stroke="#111" stroke-width="1"/>
<line x1="1012.5" y1="148" x2="1012.5" y2="167" stroke="#111" stroke-width="1"/>
<rect x="1008.5" y="160.5" width="8" height="7" fill="#00ff00" stroke="#111" stroke-width="1"/>
<line x1="1022.5" y1="164" x2="1022.5" y2="201" stroke="#111" stroke-width="1"/>
<rect x="1018.5" y="164.5" width="8" height="19" fill="#ff0000" stroke="#111" stroke-width="1"/>
<line x1="1030.5" y1="173" x2="1030.5" y2="204" stroke="#111" stroke-width="1"/>
<rect x="1026.5" y="173.5" width="8" height="23" fill="#ff0000" stroke="#111" stroke-width="1"/>
<line x1="1040.5" y1="177" x2="1040.5" y2="199" stroke="#111" stroke-width="1"/>
<rect x="1035.5" y="184" width="10" height="6" fill="#ffd700"/>
<rect x="1037.5" y="186" width="6" height="2" fill="#ff0000"/>
<rect x="1045.5" y="185.5" width="10" height="5" fill="#ffd700"/>
<rect x="1047.5" y="187" width="6" height="2" fill="#ff0000"/>
<line x1="1050.5" y1="178" x2="1050.5" y2="203" stroke="#111" stroke-width="1"/>
<line x1="1069.5" y1="171" x2="1069.5" y2="196" stroke="#111" stroke-width="1"/>
<rect x="1064.5" y="184" width="10" height="6" fill="#ffd700"/>
<rect x="1066.5" y="186" width="6" height="2" fill="#00ff00"/>
<line x1="1079.5" y1="164" x2="1079.5" y2="191" stroke="#111" stroke-width="1"/>
<rect x="1074.5" y="178" width="10" height="9" fill="#ffd700"/>
<rect x="1076.5" y="180" width="6" height="5" fill="#00ff00"/>
<line x1="1088.5" y1="160" x2="1088.5" y2="182" stroke="#111" stroke-width="1"/>
<rect x="1084.5" y="166.5" width="8" height="16" fill="#00ff00" stroke="#111" stroke-width="1"/>
<line x1="1098.5" y1="152" x2="1098.5" y2="185" stroke="#111" stroke-width="1"/>
<rect x="1093.5" y="168" width="10" height="6" fill="#ffd700"/>
<rect x="1095.5" y="170" width="6" height="2" fill="#00ff00"/>
<line x1="1108.5" y1="142" x2="1108.5" y2="171" stroke="#111" stroke-width="1"/>
<rect x="1104.5" y="156.5" width="8" height="15" fill="#00ff00" stroke="#111" stroke-width="1"/>
<ellipse cx="1118.5" cy="126.6" rx="3.7" ry="3.3" fill="#00ff00" stroke="#111" stroke-width="1"/>
<line x1="1118.5" y1="126" x2="1118.5" y2="163" stroke="#111" stroke-width="1"/>
<rect x="1114.5" y="137.5" width="8" height="26" fill="#00ff00" stroke="#111" stroke-width="1"/>
<ellipse cx="1128.5" cy="117.3" rx="3.7" ry="3.3" fill="#00ff00" stroke="#111" stroke-width="1"/>
<line x1="1128.5" y1="117" x2="1128.5" y2="150" stroke="#111" stroke-width="1"/>
<rect x="1124.5" y="126.5" width="8" height="24" fill="#00ff00" stroke="#111" stroke-width="1"/>
<ellipse cx="1137.5" cy="118.6" rx="3.7" ry="3.3" fill="#00ff00" stroke="#111" stroke-width="1"/>
<line x1="1137.5" y1="118" x2="1137.5" y2="138" stroke="#111" stroke-width="1"/>
<rect x="1133.5" y="124.5" width="8" height="14" fill="#00ff00" stroke="#111" stroke-width="1"/>
<line x1="1147.5" y1="118" x2="1147.5" y2="132" stroke="#111" stroke-width="1"/>
<rect x="1142.5" y="124" width="10" height="7" fill="#ffd700"/>
<rect x="1144.5" y="126" width="6" height="3" fill="#00ff00"/>
<ellipse cx="1157.5" cy="91.8" rx="3.7" ry="3.3" fill="#00ff00" stroke="#111" stroke-width="1"/>
<line x1="1157.5" y1="91" x2="1157.5" y2="126" stroke="#111" stroke-width="1"/>
<rect x="1153.5" y="105.5" width="8" height="21" fill="#00ff00" stroke="#111" stroke-width="1"/>
<ellipse cx="1167.5" cy="96.4" rx="3.7" ry="3.3" fill="#00ff00" stroke="#111" stroke-width="1"/>
<line x1="1167.5" y1="96" x2="1167.5" y2="115" stroke="#111" stroke-width="1"/>
<rect x="1163.5" y="105.5" width="8" height="10" fill="#00ff00" stroke="#111" stroke-width="1"/>
<ellipse cx="1176.5" cy="66.6" rx="3.7" ry="3.3" fill="#00ff00" stroke="#111" stroke-width="1"/>
<line x1="1176.5" y1="66" x2="1176.5" y2="110" stroke="#111" stroke-width="1"/>
<rect x="1172.5" y="87.5" width="8" height="23" fill="#00ff00" stroke="#111" stroke-width="1"/>
<ellipse cx="1185.5" cy="62.3" rx="3.7" ry="3.3" fill="#00ff00" stroke="#111" stroke-width="1"/>
<line x1="1185.5" y1="62" x2="1185.5" y2="98" stroke="#111" stroke-width="1"/>
<rect x="1181.5" y="74.5" width="8" height="24" fill="#00ff00" stroke="#111" stroke-width="1"/>
<line x1="1195.5" y1="70" x2="1195.5" y2="85" stroke="#111" stroke-width="1"/>
<rect x="1191.5" y="75.5" width="8" height="10" fill="#00ff00" stroke="#111" stroke-width="1"/>
<rect x="9.5" y="609.5" width="10" height="5" fill="#ffd700"/>
<rect x="11.5" y="611" width="6" height="2" fill="#00ff00"/>
<line x1="14.5" y1="597" x2="14.5" y2="624" stroke="#111" stroke-width="1"/>
<rect x="19.5" y="611.5" width="10" height="3" fill="#ffd700"/>
<line x1="24.5" y1="605" x2="24.5" y2="621" stroke="#111" stroke-width="1"/>
<line x1="33.5" y1="610" x2="33.5" y2="640" stroke="#111" stroke-width="1"/>
<rect x="28.5" y="613" width="10" height="7" fill="#ffd700"/>
<rect x="30.5" y="615" width="6" height="3" fill="#ff0000"/>
<rect x="38.5" y="611.5" width="10" height="5" fill="#ffd700"/>
<rect x="40.5" y="613" width="6" height="2" fill="#00ff00"/>
<line x1="43.5" y1="600" x2="43.5" y2="628" stroke="#111" stroke-width="1"/>
<line x1="52.5" y1="589" x2="52.5" y2="615" stroke="#111" stroke-width="1"/>
<rect x="48.5" y="600.5" width="8" height="15" fill="#00ff00" stroke="#111" stroke-width="1"/>
<line x1="62.5" y1="568" x2="62.5" y2="606" stroke="#111" stroke-width="1"/>
<rect x="58.5" y="584.5" width="8" height="22" fill="#00ff00" stroke="#111" stroke-width="1"/>
<ellipse cx="72.5" cy="557.8" rx="3.7" ry="3.3" fill="#00ff00" stroke="#111" stroke-width="1"/>
<line x1="72.5" y1="557" x2="72.5" y2="595" stroke="#111" stroke-width="1"/>
<rect x="68.5" y="567.5" width="8" height="28" fill="#00ff00" stroke="#111" stroke-width="1"/>
<ellipse cx="82.5" cy="559.6" rx="3.7" ry="3.3" fill="#00ff00" stroke="#111" stroke-width="1"/>
<line x1="82.5" y1="559" x2="82.5" y2="581" stroke="#111" stroke-width="1"/>
<rect x="78.5" y="566.5" width="8" height="15" fill="#00ff00" stroke="#111" stroke-width="1"/>
<line x1="92.5" y1="562" x2="92.5" y2="621" stroke="#111" stroke-width="1"/>
<rect x="87.5" y="573" width="10" height="17" fill="#ffd700"/>
<rect x="89.5" y="575" width="6" height="13" fill="#ff0000"/>
<line x1="101.5" y1="581" x2="101.5" y2="615" stroke="#111" stroke-width="1"/>
<rect x="96.5" y="582" width="10" height="16" fill="#ffd700"/>
<rect x="98.5" y="584" width="6" height="12" fill="#ff0000"/>
<line x1="111.5" y1="581" x2="111.5" y2="617" stroke="#111" stroke-width="1"/>
<rect x="106.5" y="591" width="10" height="5" fill="#ffd700"/>
<rect x="108.5" y="593" width="6" height="2" fill="#ff0000"/>
<line x1="120.5" y1="594" x2="120.5" y2="634" stroke="#111" stroke-width="1"/>
<rect x="116.5" y="594.5" width="8" height="24" fill="#ff0000" stroke="#111" stroke-width="1"/>
<line x1="130.5" y1="605" x2="130.5" y2="633" stroke="#111" stroke-width="1"/>
<rect x="126.5" y="605.5" width="8" height="20" fill="#ff0000" stroke="#111" stroke-width="1"/>
<rect x="135.5" y="615.5" width="10" height="5" fill="#ffd700"/>
<rect x="137.5" y="617" width="6" height="2" fill="#ff0000"/>
<line x1="140.5" y1="607" x2="140.5" y2="636" stroke="#111" stroke-width="1"/>
<line x1="150.5" y1="587" x2="150.5" y2="627" stroke="#111" stroke-width="1"/>
<rect x="145.5" y="604" width="10" height="13" fill="#ffd700"/>
<rect x="147.5" y="606" width="6" height="9" fill="#00ff00"/>
<line x1="159.5" y1="581" x2="159.5" y2="612" stroke="#111" stroke-width="1"/>
<rect x="155.5" y="592.5" width="8" height="20" fill="#00ff00" stroke="#111" stroke-width="1"/>
<line x1="169.5" y1="578" x2="169.5" y2="601" stroke="#111" stroke-width="1"/>
<rect x="165.5" y="591.5" width="8" height="9" fill="#00ff00" stroke="#111" stroke-width="1"/>
<line x1="178.5" y1="583" x2="178.5" y2="598" stroke="#111" stroke-width="1"/>
<rect x="173.5" y="588" width="10" height="6" fill="#ffd700"/>
<rect x="175.5" y="590" width="6" height="2" fill="#00ff00"/>
<line x1="188.5" y1="565" x2="188.5" y2="593" stroke="#111" stroke-width="1"/>
<rect x="184.5" y="580.5" width="8" height="13" fill="#00ff00" stroke="#111" stroke-width="1"/>
<line x1="198.5" y1="565" x2="198.5" y2="586" stroke="#111" stroke-width="1"/>
<rect x="194.5" y="572.5" width="8" height="14" fill="#00ff00" stroke="#111" stroke-width="1"/>
<rect x="203.5" y="576.5" width="10" height="3" fill="#ffd700"/>
<line x1="208.5" y1="563" x2="208.5" y2="593" stroke="#111" stroke-width="1"/>
<rect x="212.5" y="577.5" width="10" height="3" fill="#ffd700"/>
<line x1="217.5" y1="567" x2="217.5" y2="590" stroke="#111" stroke-width="1"/>
<line x1="227.5" y1="534" x2="227.5" y2="578" stroke="#111" stroke-width="1"/>
<rect x="223.5" y="556.5" width="8" height="22" fill="#00ff00" stroke="#111" stroke-width="1"/>
<line x1="237.5" y1="540" x2="237.5" y2="567" stroke="#111" stroke-width="1"/>
<rect x="233.5" y="544.5" width="8" height="23" fill="#00ff00" stroke="#111" stroke-width="1"/>
<ellipse cx="247.5" cy="526.9" rx="3.7" ry="3.3" fill="#00ff00" stroke="#111" stroke-width="1"/>
<line x1="247.5" y1="526" x2="247.5" y2="554" stroke="#111" stroke-width="1"/>
<rect x="243.5" y="536.5" width="8" height="18" fill="#00ff00" stroke="#111" stroke-width="1"/>
<ellipse cx="256.5" cy="513.8" rx="3.7" ry="3.3" fill="#00ff00" stroke="#111" stroke-width="1"/>
<line x1="256.5" y1="513" x2="256.5" y2="545" stroke="#111" stroke-width="1"/>
<rect x="252.5" y="524.5" width="8" height="21" fill="#00ff00" stroke="#111" stroke-width="1"/>
<ellipse cx="266.5" cy="506.4" rx="3.7" ry="3.3" fill="#00ff00" stroke="#111" stroke-width="1"/>
<line x1="266.5" y1="506" x2="266.5" y2="533" stroke="#111" stroke-width="1"/>
<rect x="262.5" y="517.5" width="8" height="16" fill="#00ff00" stroke="#111" stroke-width="1"/>
<line x1="275.5" y1="506" x2="275.5" y2="526" stroke="#111" stroke-width="1"/>
<rect x="270.5" y="516" width="10" height="9" fill="#ffd700"/>
<rect x="272.5" y="518" width="6" height="5" fill="#00ff00"/>
<rect x="280.5" y="516.5" width="10" height="5" fill="#ffd700"/>
<rect x="282.5" y="518" width="6" height="2" fill="#00ff00"/>
<line x1="285.5" y1="513" x2="285.5" y2="524" stroke="#111" stroke-width="1"/>
<line x1="295.5" y1="493" x2="295.5" y2="524" stroke="#111" stroke-width="1"/>
<rect x="290.5" y="507" width="10" height="12" fill="#ffd700"/>
<rect x="292.5" y="509" width="6" height="8" fill="#00ff00"/>
<ellipse cx="305.5" cy="476.1" rx="3.7" ry="3.3" fill="#00ff00" stroke="#111" stroke-width="1"/>
<line x1="305.5" y1="476" x2="305.5" y2="513" stroke="#111" stroke-width="1"/>
<rect x="301.5" y="490.5" width="8" height="23" fill="#00ff00" stroke="#111" stroke-width="1"/>
<ellipse cx="315.5" cy="476.1" rx="3.7" ry="3.3" fill="#00ff00" stroke="#111" stroke-width="1"/>
<line x1="315.5" y1="476" x2="315.5" y2="500" stroke="#111" stroke-width="1"/>
<rect x="311.5" y="486.5" width="8" height="14" fill="#00ff00" stroke="#111" stroke-width="1"/>
<ellipse cx="324.5" cy="465.6" rx="3.7" ry="3.3" fill="#00ff00" stroke="#111" stroke-width="1"/>
<line x1="324.5" y1="465" x2="324.5" y2="493" stroke="#111" stroke-width="1"/>
<rect x="320.5" y="479.5" width="8" height="14" fill="#00ff00" stroke="#111" stroke-width="1"/>
<ellipse cx="333.5" cy="459.1" rx="3.7" ry="3.3" fill="#00ff00" stroke="#111" stroke-width="1"/>
<line x1="333.5" y1="458" x2="333.5" y2="485" stroke="#111" stroke-width="1"/>
<rect x="329.5" y="470.5" width="8" height="15" fill="#00ff00" stroke="#111" stroke-width="1"/>
<ellipse cx="343.5" cy="450.6" rx="3.7" ry="3.3" fill="#00ff00" stroke="#111" stroke-width="1"/>
<line x1="343.5" y1="450" x2="343.5" y2="476" stroke="#111" stroke-width="1"/>
<rect x="339.5" y="464.5" width="8" height="12" fill="#00ff00" stroke="#111" stroke-width="1"/>
<line x1="353.5" y1="440" x2="353.5" y2="470" stroke="#111" stroke-width="1"/>
<rect x="349.5" y="450.5" width="8" height="20" fill="#00ff00" stroke="#111" stroke-width="1"/>
<line x1="916.5" y1="430" x2="916.5" y2="455" stroke="#111" stroke-width="1"/>
<rect x="912.5" y="437.5" width="8" height="12" fill="#ff0000" stroke="#111" stroke-width="1"/>
<rect x="919.5" y="439.5" width="10" height="3" fill="#ffd700"/>
<line x1="924.5" y1="428" x2="924.5" y2="458" stroke="#111" stroke-width="1"/>
<line x1="933.5" y1="438" x2="933.5" y2="463" stroke="#111" stroke-width="1"/>
<rect x="928.5" y="443" width="10" height="8" fill="#ffd700"/>
<rect x="930.5" y="445" width="6" height="4" fill="#ff0000"/>
<ellipse cx="943.5" cy="504.1" rx="3.7" ry="3.3" fill="#ff0000" stroke="#111" stroke-width="1"/>
<line x1="943.5" y1="446" x2="943.5" y2="504" stroke="#111" stroke-width="1"/>
<rect x="939.5" y="446.5" width="8" height="36" fill="#ff0000" stroke="#111" stroke-width="1"/>
<ellipse cx="953.5" cy="508.6" rx="3.7" ry="3.3" fill="#ff0000" stroke="#111" stroke-width="1"/>
<line x1="953.5" y1="465" x2="953.5" y2="508" stroke="#111" stroke-width="1"/>
<rect x="949.5" y="465.5" width="8" height="35" fill="#ff0000" stroke="#111" stroke-width="1"/>
<ellipse cx="963.5" cy="518.3" rx="3.7" ry="3.3" fill="#ff0000" stroke="#111" stroke-width="1"/>
<line x1="963.5" y1="484" x2="963.5" y2="518" stroke="#111" stroke-width="1"/>
<rect x="959.5" y="484.5" width="8" height="25" fill="#ff0000" stroke="#111" stroke-width="1"/>
<ellipse cx="972.5" cy="521.6" rx="3.7" ry="3.3" fill="#ff0000" stroke="#111" stroke-width="1"/>
<line x1="972.5" y1="497" x2="972.5" y2="521" stroke="#111" stroke-width="1"/>
<rect x="968.5" y="497.5" width="8" height="17" fill="#ff0000" stroke="#111" stroke-width="1"/>
<ellipse cx="982.5" cy="546.0" rx="3.7" ry="3.3" fill="#ff0000" stroke="#111" stroke-width="1"/>
<line x1="982.5" y1="506" x2="982.5" y2="545" stroke="#111" stroke-width="1"/>
<rect x="978.5" y="506.5" width="8" height="24" fill="#ff0000" stroke="#111" stroke-width="1"/>
<ellipse cx="992.5" cy="549.2" rx="3.7" ry="3.3" fill="#ff0000" stroke="#111" stroke-width="1"/>
<line x1="992.5" y1="518" x2="992.5" y2="549" stroke="#111" stroke-width="1"/>
<rect x="988.5" y="518.5" width="8" height="17" fill="#ff0000" stroke="#111" stroke-width="1"/>
<rect x="997.5" y="521.5" width="10" height="5" fill="#ffd700"/>
<rect x="999.5" y="523" width="6" height="2" fill="#00ff00"/>
<line x1="1002.5" y1="513" x2="1002.5" y2="530" stroke="#111" stroke-width="1"/>
<rect x="1007.5" y="518.5" width="10" height="5" fill="#ffd700"/>
<rect x="1009.5" y="520" width="6" height="2" fill="#00ff00"/>
<line x1="1012.5" y1="507" x2="1012.5" y2="528" stroke="#111" stroke-width="1"/>
<line x1="1021.5" y1="522" x2="1021.5" y2="560" stroke="#111" stroke-width="1"/>
<rect x="1017.5" y="522.5" width="8" height="20" fill="#ff0000" stroke="#111" stroke-width="1"/>
<line x1="1030.5" y1="532" x2="1030.5" y2="561" stroke="#111" stroke-width="1"/>
<rect x="1026.5" y="532.5" width="8" height="20" fill="#ff0000" stroke="#111" stroke-width="1"/>
<rect x="1035.5" y="540.5" width="10" height="5" fill="#ffd700"/>
<rect x="1037.5" y="542" width="6" height="2" fill="#ff0000"/>
<line x1="1040.5" y1="532" x2="1040.5" y2="553" stroke="#111" stroke-width="1"/>
<rect x="1045.5" y="543.5" width="10" height="5" fill="#ffd700"/>
<rect x="1047.5" y="545" width="6" height="2" fill="#ff0000"/>
<line x1="1050.5" y1="533" x2="1050.5" y2="561" stroke="#111" stroke-width="1"/>
<rect x="1065.5" y="541.5" width="10" height="5" fill="#ffd700"/>
<rect x="1067.5" y="543" width="6" height="2" fill="#00ff00"/>
<line x1="1070.5" y1="527" x2="1070.5" y2="557" stroke="#111" stroke-width="1"/>
<line x1="1079.5" y1="523" x2="1079.5" y2="553" stroke="#111" stroke-width="1"/>
<rect x="1074.5" y="537" width="10" height="7" fill="#ffd700"/>
<rect x="1076.5" y="539" width="6" height="3" fill="#00ff00"/>
<line x1="1088.5" y1="519" x2="1088.5" y2="541" stroke="#111" stroke-width="1"/>
<rect x="1084.5" y="527.5" width="8" height="14" fill="#00ff00" stroke="#111" stroke-width="1"/>
<rect x="1093.5" y="532.5" width="10" height="3" fill="#ffd700"/>
<line x1="1098.5" y1="514" x2="1098.5" y2="555" stroke="#111" stroke-width="1"/>
<line x1="1108.5" y1="499" x2="1108.5" y2="533" stroke="#111" stroke-width="1"/>
<rect x="1103.5" y="518" width="10" height="16" fill="#ffd700"/>
<rect x="1105.5" y="520" width="6" height="12" fill="#00ff00"/>
<line x1="1118.5" y1="480" x2="1118.5" y2="526" stroke="#111" stroke-width="1"/>
<rect x="1114.5" y="494.5" width="8" height="32" fill="#00ff00" stroke="#111" stroke-width="1"/>
<ellipse cx="1128.5" cy="451.5" rx="3.7" ry="3.3" fill="#00ff00" stroke="#111" stroke-width="1"/>
<line x1="1128.5" y1="451" x2="1128.5" y2="509" stroke="#111" stroke-width="1"/>
<rect x="1124.5" y="469.5" width="8" height="40" fill="#00ff00" stroke="#111" stroke-width="1"/>
<ellipse cx="1137.5" cy="451.5" rx="3.7" ry="3.3" fill="#00ff00" stroke="#111" stroke-width="1"/>
<line x1="1137.5" y1="451" x2="1137.5" y2="488" stroke="#111" stroke-width="1"/>
<rect x="1133.5" y="457.5" width="8" height="31" fill="#00ff00" stroke="#111" stroke-width="1"/>
<ellipse cx="1147.5" cy="442.3" rx="3.7" ry="3.3" fill="#00ff00" stroke="#111" stroke-width="1"/>
<line x1="1147.5" y1="442" x2="1147.5" y2="472" stroke="#111" stroke-width="1"/>
<rect x="1143.5" y="452.5" width="8" height="20" fill="#00ff00" stroke="#111" stroke-width="1"/>
<ellipse cx="1157.5" cy="398.2" rx="3.7" ry="3.3" fill="#00ff00" stroke="#111" stroke-width="1"/>
<line x1="1157.5" y1="398" x2="1157.5" y2="462" stroke="#111" stroke-width="1"/>
<rect x="1153.5" y="423.5" width="8" height="39" fill="#00ff00" stroke="#111" stroke-width="1"/>
<ellipse cx="1166.5" cy="413.4" rx="3.7" ry="3.3" fill="#00ff00" stroke="#111" stroke-width="1"/>
<line x1="1166.5" y1="413" x2="1166.5" y2="442" stroke="#111" stroke-width="1"/>
<rect x="1162.5" y="421.5" width="8" height="21" fill="#00ff00" stroke="#111" stroke-width="1"/>
<ellipse cx="1176.5" cy="385.2" rx="3.7" ry="3.3" fill="#00ff00" stroke="#111" stroke-width="1"/>
<line x1="1176.5" y1="385" x2="1176.5" y2="432" stroke="#111" stroke-width="1"/>
<rect x="1172.5" y="407.5" width="8" height="25" fill="#00ff00" stroke="#111" stroke-width="1"/>
<ellipse cx="1185.5" cy="382.6" rx="3.7" ry="3.3" fill="#00ff00" stroke="#111" stroke-width="1"/>
<line x1="1185.5" y1="382" x2="1185.5" y2="418" stroke="#111" stroke-width="1"/>
<rect x="1181.5" y="394.5" width="8" height="24" fill="#00ff00" stroke="#111" stroke-width="1"/>
<line x1="1195.5" y1="396" x2="1195.5" y2="406" stroke="#111" stroke-width="1"/>
<rect x="1191.5" y="399.5" width="8" height="7" fill="#00ff00" stroke="#111" stroke-width="1"/>
<polyline points="14.0,271.9 24.4,272.3 52.6,268.4 69.6,260.0 82.0,256.3 92.6,251.0 103.7,248.0 120.0,246.7 129.0,248.0 140.7,248.0 150.4,244.4 158.5,248.0 170.0,247.8 188.0,251.4 207.8,248.7 217.7,244.2 227.5,232.5 238.3,228.0 254.5,220.0 285.0,202.0 296.0,193.8 319.0,173.0 339.0,159.7 353.4,146.5 371.4,135.7 391.0,130.4 420.0,127.7 430.7,131.3 439.7,133.0 459.5,145.6 477.5,149.2 491.8,154.6 502.6,153.7 507.2,154.0 518.0,159.0 537.8,156.4 555.8,151.6 575.5,163.6 593.5,170.3 606.0,177.0 626.0,180.7 643.9,190.0 662.8,191.2 680.0,182.5 688.0,176.2 706.0,160.0 725.7,147.4 747.3,134.0 765.3,120.5 788.7,107.0 808.5,101.6 839.0,97.0 876.0,91.7 928.0,89.4 940.7,91.7 966.0,105.2 1001.8,120.5 1020.0,127.4 1040.0,139.4 1050.2,141.5 1080.4,140.5 1098.4,141.5 1118.5,136.4 1138.6,127.4 1154.7,119.3 1168.8,105.3 1180.9,89.2 1195.3,80.0" fill="none" stroke="#3a3aff" stroke-width="1.2" stroke-linejoin="round" />
<polyline points="14.0,335.5 24.4,333.3 37.0,334.0 52.0,330.4 63.7,329.0 82.0,322.0 92.6,328.0 103.7,331.0 120.7,337.0 130.0,336.3 148.0,338.5 159.0,335.5 169.0,338.5 178.9,337.0 199.7,321.8 227.4,301.0 247.3,283.0 294.0,252.3 323.0,224.4 343.5,212.7 369.6,212.2 402.0,209.5 412.7,211.3 429.0,219.4 441.5,226.6 454.0,236.5 459.5,238.0 480.0,255.0 560.0,270.0 650.0,270.0 702.4,238.0 731.0,204.0 756.3,177.0 785.0,158.2 799.5,155.5 812.0,156.4 839.0,151.0 868.8,144.7 908.3,140.2 933.5,140.8 948.0,148.3 973.0,164.5 992.9,182.5 1012.6,190.6 1030.1,207.8 1054.2,212.8 1079.3,216.4 1090.4,210.8 1108.5,211.8 1118.5,208.8 1138.6,190.7 1166.8,164.6 1195.3,136.0" fill="none" stroke="#3a3aff" stroke-width="1.2" stroke-linejoin="round" />
<polyline points="14.0,303.7 41.5,301.5 59.0,296.0 82.0,289.0 92.0,290.0 118.5,291.9 170.0,291.9 179.0,293.7 207.8,282.0 242.0,259.5 296.0,222.6 324.7,198.0 344.4,184.3 366.0,176.2 387.5,171.7 407.3,170.0 423.5,173.5 441.5,180.7 459.5,192.4 474.0,195.0 491.8,200.5 510.0,205.0 523.4,206.0 546.8,201.4 568.3,209.5 593.5,226.6 615.0,232.0 635.0,239.0 650.0,242.0 662.8,238.3 680.0,223.9 706.0,202.3 740.0,171.7 760.0,150.0 781.5,134.8 799.5,128.6 822.9,127.0 850.0,122.0 876.0,118.0 933.5,115.6 948.0,123.2 983.9,146.5 1012.6,157.3 1030.1,172.6 1058.2,178.2 1094.4,176.6 1118.5,172.6 1146.7,153.5 1174.8,125.4 1195.3,108.3" fill="none" stroke="#a0a0a0" stroke-width="1.2" stroke-linejoin="round" />
<polyline points="14.4,588.0 25.2,587.2 52.2,581.0 72.0,570.0 91.7,555.7 120.5,547.7 129.5,550.4 149.3,548.2 163.6,554.0 170.0,554.5 187.0,558.7 208.0,557.7 217.7,554.5 227.2,545.0 244.0,537.6 265.3,526.0 285.5,509.0 297.0,501.5 339.5,468.7 345.8,462.4 370.0,445.0 900.0,394.0 916.7,394.5 924.5,395.3 943.9,401.4 963.4,418.4 973.0,430.5 1002.3,457.3 1031.5,484.0 1041.3,492.6 1055.8,496.3 1077.2,497.0 1090.0,498.3 1112.8,492.0 1128.0,479.3 1150.8,457.7 1171.0,438.7 1194.0,404.4" fill="none" stroke="#3a3aff" stroke-width="1.2" stroke-linejoin="round" />
<polyline points="14.4,658.3 23.4,655.6 43.2,653.8 61.2,645.7 82.7,632.7 91.7,637.0 109.7,638.0 120.5,641.7 131.3,640.3 151.0,643.5 160.0,642.4 178.8,647.2 188.6,639.7 208.2,633.7 217.2,626.9 227.8,621.6 246.6,603.5 256.4,596.8 280.0,575.7 297.0,566.0 318.3,541.8 339.5,523.4 345.8,522.7 370.0,510.0 900.0,458.0 916.7,462.0 934.2,467.0 953.7,486.5 982.9,508.4 1012.0,530.3 1031.5,557.0 1051.0,565.5 1062.0,569.4 1079.8,575.2 1090.0,572.0 1107.7,576.2 1123.0,569.4 1145.8,545.3 1168.6,517.4 1195.2,476.8" fill="none" stroke="#3a3aff" stroke-width="1.2" stroke-linejoin="round" />
<polyline points="14.4,623.7 43.2,617.8 63.0,608.0 82.7,598.0 97.1,595.3 126.0,593.5 152.9,595.3 170.0,600.0 178.5,602.0 208.0,594.7 218.7,590.5 250.5,566.0 276.0,547.0 297.0,534.4 318.3,514.3 335.0,499.4 345.8,493.0 370.0,478.0 900.0,425.0 916.7,428.0 934.2,431.8 944.0,437.8 973.0,467.0 1012.0,501.0 1031.5,518.0 1051.0,530.3 1062.0,532.6 1082.3,535.1 1115.3,532.0 1145.8,504.7 1171.0,471.7 1195.2,440.0" fill="none" stroke="#a0a0a0" stroke-width="1.2" stroke-linejoin="round" />
<polygon points="58.6,236.3 86.6,236.3 72.6,223.7" fill="#00ff00" stroke="#111" stroke-width="1"/><text x="72.6" y="221" text-anchor="middle" font-size="11" font-family="Liberation Sans, sans-serif">HH</text>
<polygon points="339.4,115.6 367.4,115.6 353.4,102.5" fill="#00ff00" stroke="#111" stroke-width="1"/><text x="353.4" y="100" text-anchor="middle" font-size="11" font-family="Liberation Sans, sans-serif">HH</text>
<polygon points="978.4,222 1006.4,222 992.4,209" fill="#00ff00" stroke="#111" stroke-width="1"/><text x="992.4" y="233" text-anchor="middle" font-size="11" font-family="Liberation Sans, sans-serif">HL</text>
<polygon points="58.2,542.6 86.2,542.6 72.2,529.7" fill="#00ff00" stroke="#111" stroke-width="1"/><text x="72.2" y="527" text-anchor="middle" font-size="11" font-family="Liberation Sans, sans-serif">HH</text>
<polygon points="978.3,576 1006.3,576 992.3,563.9" fill="#00ff00" stroke="#111" stroke-width="1"/><text x="992.3" y="587" text-anchor="middle" font-size="11" font-family="Liberation Sans, sans-serif">HL</text>
<line x1="2" y1="704.3" x2="1202" y2="704.3" stroke="#ff0000" stroke-width="2"/>
<line x1="2" y1="762.2" x2="1202" y2="762.2" stroke="#008000" stroke-width="2"/>
<line x1="2" y1="806.4" x2="1202" y2="806.4" stroke="#ff0000" stroke-width="2"/>
<line x1="2" y1="853.5" x2="1202" y2="853.5" stroke="#008000" stroke-width="2"/>
<polyline points="14.4,752.1 24.4,734.0 33.8,752.7 43.8,719.4 53.2,713.3 63.2,701.6 72.7,700.8 82.6,728.5 92.0,762.6 102.0,728.5 111.5,748.8 120.6,755.4 130.3,730.5 140.0,720.2 150.3,706.3 159.5,706.3 169.2,701.6 178.9,730.5 188.6,709.1 198.3,705.5 208.5,751.5 217.7,719.4 227.4,707.2 237.1,704.4 246.8,701.6 256.5,700.0 265.7,723.0 275.1,711.9 285.1,709.1 294.5,700.0 305.0,699.4 314.8,730.5 323.9,708.3 333.3,706.9 343.9,705.5 353.0,730.0 900.0,740.0 915.6,745.5 924.5,721.3 934.5,755.3 944.0,766.5 963.6,768.7 972.8,738.6 982.5,760.9 992.3,720.4 1002.0,712.9 1021.6,761.5 1040.5,733.6 1050.9,749.2 1069.6,721.8 1079.6,705.1 1088.5,707.9 1099.0,707.3 1108.6,699.5 1119.2,698.1 1129.0,698.1 1137.3,719.6 1147.1,712.1 1156.9,702.9 1166.6,700.1 1176.4,698.1 1186.1,700.1 1195.0,703.7" fill="none" stroke="#0000ff" stroke-width="2.4" stroke-linejoin="round" />
<polyline points="14.7,837.7 24.1,825.0 34.2,840.3 43.6,817.5 52.0,811.6 60.9,804.8 71.5,803.3 82.4,810.4 91.8,854.0 101.9,825.6 111.0,840.3 120.4,850.9 130.6,835.7 140.7,828.1 150.9,809.1 159.7,821.0 169.4,813.4 179.5,817.5 188.9,805.3 199.0,804.0 208.4,846.4 216.8,820.0 226.9,809.8 237.0,809.1 247.2,805.3 257.4,803.3 265.7,814.2 275.1,809.8 286.0,821.8 295.4,805.3 305.5,803.3 314.7,817.5 324.1,805.8 334.2,805.8 343.6,804.0 353.2,831.1 363.4,843.8 373.0,828.6 391.8,808.3 401.4,842.0 411.0,829.4 421.2,854.0 430.6,829.4 440.7,837.0 450.1,853.0 459.7,835.7 469.4,815.4 479.5,813.4 488.9,837.7 498.3,853.0 508.4,820.0 518.0,837.7 528.2,821.0 537.1,811.6 546.5,839.5 556.6,853.0 565.7,851.4 575.9,854.7 586.0,831.1 595.4,815.4 604.8,809.1 614.7,833.7 624.1,822.5 634.2,830.1 643.6,815.4 653.2,810.4 663.4,804.8 673.5,802.7 685.0,802.0 693.8,802.2 702.0,801.5 711.6,812.4 721.2,807.8 731.3,824.3 740.7,811.6 750.9,806.5 759.7,804.8 769.4,821.8 779.5,810.9 788.9,828.6 799.0,843.3 808.4,824.3 817.5,842.0 827.7,825.0 837.1,855.5 847.2,813.4 857.4,809.8 866.2,829.4 875.9,848.4 886.0,852.2 895.4,842.8 905.6,854.5 914.9,844.7 924.4,826.6 934.4,853.3 944.5,857.3 954.5,858.2 971.7,858.2 982.6,860.2 992.4,830.3 1002.7,820.0 1012.5,837.2 1021.9,853.8 1031.4,838.0 1040.6,829.5 1050.6,842.4 1060.6,834.3 1070.7,825.2 1079.3,808.5 1089.3,813.7 1098.5,821.7 1108.0,804.5 1118.0,802.2 1128.0,801.6 1137.5,808.5 1147.3,805.1 1157.6,802.2 1166.8,802.2 1176.8,801.6 1185.4,810.8 1195.5,815.1" fill="none" stroke="#0000ff" stroke-width="2.4" stroke-linejoin="round" />
<polygon points="59.9,685.4 66.5,685.4 66.5,688.8 70.2,688.8 63.2,695.8 56.2,688.8 59.9,688.8" fill="#ff0000" stroke="#222" stroke-width="0.8"/>
<polygon points="165.9,685.4 172.5,685.4 172.5,688.8 176.2,688.8 169.2,695.8 162.2,688.8 165.9,688.8" fill="#ff0000" stroke="#222" stroke-width="0.8"/>
<polygon points="243.5,685.4 250.1,685.4 250.1,688.8 253.8,688.8 246.8,695.8 239.8,688.8 243.5,688.8" fill="#ff0000" stroke="#222" stroke-width="0.8"/>
<polygon points="1105.3,685.4 1111.9,685.4 1111.9,688.8 1115.6,688.8 1108.6,695.8 1101.6,688.8 1105.3,688.8" fill="#ff0000" stroke="#222" stroke-width="0.8"/>
<polygon points="1163.3,685.4 1169.9,685.4 1169.9,688.8 1173.6,688.8 1166.6,695.8 1159.6,688.8 1163.3,688.8" fill="#ff0000" stroke="#222" stroke-width="0.8"/>
<polygon points="88.7,780 95.3,780 95.3,773.2 99.0,773.2 92.0,766.2 85.0,773.2 88.7,773.2" fill="#0000ff" stroke="#222" stroke-width="0.8"/>
<polygon points="940.7,782.6 947.3,782.6 947.3,776.8 951.0,776.8 944.0,769.8 937.0,776.8 940.7,776.8" fill="#0000ff" stroke="#222" stroke-width="0.8"/>
<polygon points="59.6,791.8 66.2,791.8 66.2,793.6 69.9,793.6 62.9,800.6 55.9,793.6 59.6,793.6" fill="#ff0000" stroke="#222" stroke-width="0.8"/>
<polygon points="185.6,791.8 192.2,791.8 192.2,793.6 195.9,793.6 188.9,800.6 181.9,793.6 185.6,793.6" fill="#ff0000" stroke="#222" stroke-width="0.8"/>
<polygon points="243.9,791.8 250.5,791.8 250.5,793.6 254.2,793.6 247.2,800.6 240.2,793.6 243.9,793.6" fill="#ff0000" stroke="#222" stroke-width="0.8"/>
<polygon points="320.8,791.8 327.4,791.8 327.4,793.6 331.1,793.6 324.1,800.6 317.1,793.6 320.8,793.6" fill="#ff0000" stroke="#222" stroke-width="0.8"/>
<polygon points="659.6,791.8 666.2,791.8 666.2,793.6 669.9,793.6 662.9,800.6 655.9,793.6 659.6,793.6" fill="#ff0000" stroke="#222" stroke-width="0.8"/>
<polygon points="747.6,791.8 754.2,791.8 754.2,793.6 757.9,793.6 750.9,800.6 743.9,793.6 747.6,793.6" fill="#ff0000" stroke="#222" stroke-width="0.8"/>
<polygon points="1105.5,791.8 1112.1,791.8 1112.1,793.6 1115.8,793.6 1108.8,800.6 1101.8,793.6 1105.5,793.6" fill="#ff0000" stroke="#222" stroke-width="0.8"/>
<polygon points="1169,792 1183,792 1176,798.5" fill="#ff0000" stroke="#222" stroke-width="0.8"/>
<polygon points="417.9,870 424.5,870 424.5,864.3 428.2,864.3 421.2,857.3 414.2,864.3 417.9,864.3" fill="#0000ff" stroke="#222" stroke-width="0.8"/>
<polygon points="572.6,870 579.2,870 579.2,864.3 582.9,864.3 575.9,857.3 568.9,864.3 572.6,864.3" fill="#0000ff" stroke="#222" stroke-width="0.8"/>
<polygon points="902.3,870 908.9,870 908.9,864.3 912.6,864.3 905.6,857.3 898.6,864.3 902.3,864.3" fill="#0000ff" stroke="#222" stroke-width="0.8"/>
<text x="2.3" y="56" font-size="11" font-family="Liberation Sans, sans-serif" textLength="82.5" lengthAdjust="spacingAndGlyphs">ES 09-13 (Daily),</text>
<text x="90.4" y="56" font-size="11" font-family="Liberation Sans, sans-serif" textLength="120.5" lengthAdjust="spacingAndGlyphs">BigMO(ES 09-13 (Daily)),</text>
<text x="218" y="56" font-size="11" font-family="Liberation Sans, sans-serif" textLength="342.5" lengthAdjust="spacingAndGlyphs">Navi Bars(ES 09-13 (Daily),System.Drawing.Pen,System.Drawing.Pen),</text>
<text x="567.3" y="56" font-size="11" font-family="Liberation Sans, sans-serif" textLength="173.5" lengthAdjust="spacingAndGlyphs">Velocity Channel(ES 09-13 (Daily)),</text>
<text x="743.5" y="56" font-size="11" font-family="Liberation Sans, sans-serif" textLength="306.5" lengthAdjust="spacingAndGlyphs">NaviTrend(ES 09-13 (Daily),Color [Red],10,1,7,5,14,Color [Lime])</text>
<text x="2.5" y="380" font-size="11" font-family="Liberation Sans, sans-serif" textLength="85" lengthAdjust="spacingAndGlyphs">YM 09-13 (Daily),</text>
<text x="92.7" y="380" font-size="11" font-family="Liberation Sans, sans-serif" textLength="306" lengthAdjust="spacingAndGlyphs">NaviTrend(YM 09-13 (Daily),Color [Red],10,1,7,5,14,Color [Lime]),</text>
<text x="1058" y="380" font-size="11" font-family="Liberation Sans, sans-serif" textLength="168" lengthAdjust="spacingAndGlyphs" text-anchor="end">Velocity Channel(YM 09-13 (Daily))</text>
<text x="5.3" y="700.2" font-size="11" font-family="Liberation Sans, sans-serif" textLength="157.5" lengthAdjust="spacingAndGlyphs">NaviTrend HiLo(ES 09-13 (Daily))</text>
<text x="5.6" y="806" font-size="11" font-family="Liberation Sans, sans-serif" textLength="158" lengthAdjust="spacingAndGlyphs">NaviTrend HiLo(YM 09-13 (Daily))</text>
<text x="2.8" y="868" font-size="11" font-family="Liberation Sans, sans-serif" textLength="116.5" lengthAdjust="spacingAndGlyphs">© 2013 NinjaTrader, LLC</text>
<polygon points="1203.5,81.8 1209,77.0 1250.5,77.0 1250.5,86.5 1209,86.5" fill="#0000ff" stroke="#111" stroke-width="0.8"/><text x="1249.0" y="85.8" text-anchor="end" font-size="11.5" fill="#fff" font-family="Liberation Sans, sans-serif">1716,42</text>
<polygon points="1203.5,73.2 1209,67.3 1250.5,67.3 1250.5,79.0 1209,79.0" fill="#000" stroke="#111" stroke-width="0.8"/><text x="1249.0" y="77.2" text-anchor="end" font-size="11.5" fill="#fff" font-family="Liberation Sans, sans-serif">1724,00</text>
<polygon points="1203.5,107.7 1209,101.6 1250.5,101.6 1250.5,113.8 1209,113.8" fill="#8c8c8c" stroke="#111" stroke-width="0.8"/><text x="1249.0" y="111.7" text-anchor="end" font-size="11.5" fill="#000" font-family="Liberation Sans, sans-serif">1697,15</text>
<polygon points="1203.5,135.3 1209,129.5 1250.5,129.5 1250.5,141.2 1209,141.2" fill="#0000ff" stroke="#111" stroke-width="0.8"/><text x="1249.0" y="139.3" text-anchor="end" font-size="11.5" fill="#fff" font-family="Liberation Sans, sans-serif">1675,89</text>
<polygon points="1203.5,404.0 1209,399.0 1242,399.0 1242,409.0 1209,409.0" fill="#0000ff" stroke="#111" stroke-width="0.8"/><text x="1240.5" y="408.0" text-anchor="end" font-size="11.5" fill="#fff" font-family="Liberation Sans, sans-serif">15663</text>
<polygon points="1203.5,397.4 1209,391.7 1242,391.7 1242,403.0 1209,403.0" fill="#000" stroke="#111" stroke-width="0.8"/><text x="1240.5" y="401.4" text-anchor="end" font-size="11.5" fill="#fff" font-family="Liberation Sans, sans-serif">15639</text>
<polygon points="1203.5,439.6 1209,433.6 1242,433.6 1242,445.5 1209,445.5" fill="#8c8c8c" stroke="#111" stroke-width="0.8"/><text x="1240.5" y="443.6" text-anchor="end" font-size="11.5" fill="#000" font-family="Liberation Sans, sans-serif">15406</text>
<polygon points="1203.5,476.5 1209,470.4 1242,470.4 1242,482.6 1209,482.6" fill="#0000ff" stroke="#111" stroke-width="0.8"/><text x="1240.5" y="480.5" text-anchor="end" font-size="11.5" fill="#fff" font-family="Liberation Sans, sans-serif">15203</text>
<polygon points="1203.5,703.3 1209,697.3 1239,697.3 1239,709.3 1209,709.3" fill="#0000ff" stroke="#111" stroke-width="0.8"/><text x="1237.5" y="707.3" text-anchor="end" font-size="11.5" fill="#fff" font-family="Liberation Sans, sans-serif">92,37</text>
<polygon points="1203.5,815.1 1209,809.4 1239,809.4 1239,820.9 1209,820.9" fill="#0000ff" stroke="#111" stroke-width="0.8"/><text x="1237.5" y="819.1" text-anchor="end" font-size="11.5" fill="#fff" font-family="Liberation Sans, sans-serif">76,96</text>
</svg>
<div id="title" class="abs">
  <svg class="abs" style="left:3px;top:2px" width="14" height="13" viewBox="0 0 14 13"><rect x="0.5" y="0.5" width="13" height="12" fill="#fff" stroke="#9ab"/><path d="M1 6h12M1 9h12M5 1v11M9 1v11" stroke="#c8d0e0" stroke-width="1"/><path d="M1 11 L4 7 L7 8 L12 3" stroke="#1c5cc8" stroke-width="1.6" fill="none"/><path d="M1 7 L4 3 L8 5 L13 1" stroke="#30b030" stroke-width="1.4" fill="none"/></svg>
  <svg class="abs" style="left:0;top:0" width="400" height="16"><text x="19.5" y="12" font-family="Liberation Sans" font-weight="bold" font-size="10.5" fill="#e0ded4" textLength="331" lengthAdjust="spacingAndGlyphs" xml:space="preserve">ES 09-13 (Daily) / YM 09-13 (Daily)  03.04.2013 - 21.09.2013</text></svg>
  <div class="abs" style="left:1195px;top:4px;width:10px;height:10px;background:#d4d0c8;"><svg width="10" height="10" style="position:absolute;left:0;top:0"><path d="M3.5 1.5v6h4" stroke="#000" stroke-width="1.3" fill="none"/></svg></div>
  <div class="abs wbtn" style="left:1211px;top:2px;width:15px;height:13px"><div class="abs" style="left:3px;top:7px;width:6px;height:2px;background:#000"></div></div>
  <div class="abs wbtn" style="left:1227px;top:2px;width:15px;height:13px"><svg class="abs" style="left:2px;top:1px" width="10" height="9"><path d="M3.5 1.5h5v4h-2M3.5 1.5v2" stroke="#000" stroke-width="1" fill="none"/><rect x="1.5" y="3.5" width="5" height="4" fill="none" stroke="#000"/><path d="M1 3.5h6M3 1.2h6" stroke="#000" stroke-width="1.5"/></svg></div>
  <div class="abs wbtn" style="left:1244px;top:2px;width:16px;height:13px"><svg class="abs" style="left:3px;top:2px" width="9" height="8"><path d="M1 1L7.5 7M7.5 1L1 7" stroke="#000" stroke-width="1.6"/></svg></div>
</div>
<div id="tool" class="abs">
  <svg class="abs" style="left:0;top:0" width="410" height="25">
<rect x="2" y="6" width="2" height="2" fill="#a8a49c"/>
<rect x="2" y="9" width="2" height="2" fill="#a8a49c"/>
<rect x="2" y="12" width="2" height="2" fill="#a8a49c"/>
<rect x="2" y="15" width="2" height="2" fill="#a8a49c"/>
<rect x="2" y="18" width="2" height="2" fill="#a8a49c"/>
<rect x="10.5" y="5" width="1" height="16" fill="#b0aca4"/><rect x="11.5" y="5" width="1" height="16" fill="#fff"/>
<text x="17.5" y="16.5" font-size="11" font-family="Liberation Sans, sans-serif" textLength="42" lengthAdjust="spacingAndGlyphs">ES 09-13</text>
<polygon points="65,12 72,12 68.5,16" fill="#000"/>
<text x="79.5" y="16.5" font-size="11" font-family="Liberation Sans, sans-serif" textLength="23" lengthAdjust="spacingAndGlyphs">Daily</text>
<polygon points="107,12 114,12 110.5,16" fill="#000"/>
<rect x="120" y="6" width="1" height="14" fill="#b0aca4"/><rect x="121" y="6" width="1" height="14" fill="#fff"/>
<rect x="126.0" y="5.5" width="1" height="14" fill="#000"/><rect x="124.7" y="8" width="3.6" height="9" rx="1" fill="#4ad41a" stroke="#222" stroke-width="0.7"/>
<rect x="132.0" y="5.5" width="1" height="14" fill="#000"/><rect x="130.7" y="8" width="3.6" height="9" rx="1" fill="#4ad41a" stroke="#222" stroke-width="0.7"/>
<rect x="137.5" y="5.5" width="1" height="14" fill="#000"/><rect x="136.2" y="8" width="3.6" height="9" rx="1" fill="#e8302a" stroke="#222" stroke-width="0.7"/>
<polygon points="142.5,12 148.5,12 145.5,15.5" fill="#000"/>
<path d="M156 19 L158 14 L166 6 L169 9 L161 17 Z" fill="#f2d22a" stroke="#8a6a10" stroke-width="0.8"/><path d="M166 6 L169 9 L170 8 L167 5 Z" fill="#e05050"/><path d="M156 19 L158 14 L161 17 Z" fill="#333"/>
<polygon points="171,12 177,12 174,15.5" fill="#000"/>
<circle cx="190" cy="13" r="4" fill="#9cc8f0" stroke="#8890a0" stroke-width="1.2"/><path d="M187 16 L183 20" stroke="#333" stroke-width="2"/><path d="M196 5v5M193.5 7.5h5" stroke="#10a010" stroke-width="2"/>
<circle cx="213" cy="13" r="4" fill="#d8d8d8" stroke="#b8b8b8" stroke-width="1.2"/><path d="M210 16 L206 20" stroke="#bbb" stroke-width="2"/><path d="M217 7.5h5" stroke="#b0b0b0" stroke-width="1.5"/>
<rect x="229.5" y="6" width="1" height="14" fill="#b0aca4"/><rect x="230.5" y="6" width="1" height="14" fill="#fff"/>
<path d="M235 7 L235 18 L238 15 L241 20 L243 19 L240 14 L244 14 Z" fill="#fff" stroke="#555" stroke-width="1"/>
<polygon points="251,12 257,12 254,15.5" fill="#000"/>
<rect x="264.5" y="6.5" width="13" height="13" fill="#fff" stroke="#8a8a8a"/><circle cx="272" cy="12" r="3.3" fill="#a0c8f0" stroke="#7a8aa0"/><path d="M269.5 14.5 L265 19" stroke="#333" stroke-width="1.8"/>
<rect x="285.5" y="6" width="1" height="14" fill="#b0aca4"/><rect x="286.5" y="6" width="1" height="14" fill="#fff"/>
<rect x="289.5" y="2.5" width="22" height="20" fill="#b6c4e2" stroke="#3c5a9a"/>
<path d="M293 6h7l2 2h-9zM293 14h7l2 2h-9z" fill="#30c030"/><rect x="293" y="13" width="8" height="3" fill="#e03030"/><rect x="293" y="6" width="8" height="3" fill="#30c030"/><rect x="302" y="6" width="2" height="14" fill="#30c030" stroke="#222" stroke-width="0.5"/><rect x="305" y="14" width="3" height="6" fill="#e03030"/>
<rect x="314.5" y="6.5" width="15" height="13" fill="#e8e8e8" stroke="#666"/><rect x="317" y="9" width="3" height="8" fill="#30c030" stroke="#222" stroke-width="0.6"/><rect x="321" y="7" width="3" height="7" fill="#30c030" stroke="#222" stroke-width="0.6"/><rect x="325" y="10" width="3" height="8" fill="#e03030" stroke="#222" stroke-width="0.6"/>
<rect x="337.5" y="6.5" width="15" height="13" fill="#f0f0f0" stroke="#777"/><path d="M339 13 L342 10 L345 11 L348 9 L351 11" stroke="#20a040" fill="none"/><path d="M339 16 L342 13 L345 15 L348 13 L351 15" stroke="#e05050" fill="none"/>
<path d="M362.5 6.5h8l3 3v10h-11z" fill="#eee" stroke="#c8c8c8"/><text x="364.5" y="17" font-size="9" font-weight="bold" fill="#c0c0c0" font-family="Liberation Sans, sans-serif">$</text>
<rect x="383.5" y="6.5" width="14" height="13" fill="#e6ecf8" stroke="#8898b8"/><rect x="384" y="7" width="13" height="3" fill="#6a9ad8"/><rect x="384" y="11" width="4" height="8" fill="#b070e0"/>
</svg>
</div>
<div class="abs wbtn" style="left:1239px;top:42px;width:22px;height:20px"><div class="abs dd" style="left:5px;top:7px;border-left-width:5px;border-right-width:5px;border-top-width:5px"></div></div>
<div id="dlg" class="abs"><div class="in"></div>
<div class="abs" style="left:3px;top:2px;width:562px;height:14px;background:#0a246a"></div>
<div class="abs" style="left:5px;top:3px;width:100px;height:14px;color:#fff;font-weight:bold;font-size:11.5px;line-height:14px">Indicators</div>
<div class="abs" style="left:552px;top:4px;width:11px;height:10px;background:#d4d0c8;border:1px solid;border-color:#fff #404040 #404040 #fff"><svg width="9" height="8" style="position:absolute;left:0;top:0"><path d="M2 1.5L6.5 6M6.5 1.5L2 6" stroke="#000" stroke-width="1.1"/></svg></div>
<div class="abs" style="left:3px;top:18px;width:277px;height:467px;border-left:1px solid #404040;border-top:1px solid #404040;border-bottom:1px solid #fff"></div>
<div class="abs" style="left:4px;top:19px;width:271px;height:267px;background:#fff;border:1px solid;border-color:#808080 #fff #fff #808080;box-shadow:inset 1px 1px #404040;overflow:hidden"><div class="abs" style="left:6.5px;top:1px;width:300px;height:264px;transform:scaleX(0.955);transform-origin:0 0"><div class="li" style="left:0;top:0px">BigMO</div><div class="li" style="left:0;top:12px">Navi Bars</div><div class="li" style="left:0;top:24px">NaviTrend</div><div class="li" style="left:0;top:36px">NaviTrend HiLo</div><div class="li" style="left:0;top:48px">NaviTrend Pivots</div><div class="li" style="left:0;top:60px">TI AWave</div><div class="li" style="left:0;top:72px">TI Counter</div><div class="li" style="left:0;top:84px">TI Pivots</div><div class="li" style="left:0;top:96px">TI Ti_1</div><div class="li" style="left:0;top:108px">TI TWave</div><div class="li" style="left:0;top:120px">TI VolumeUpDown</div><div class="li" style="left:0;top:132px">Ti-1</div><div class="li" style="left:0;top:144px">Velocity Channel</div><div class="li" style="left:0;top:156px">*!NindicatorDepthAnalyzer</div><div class="li" style="left:0;top:168px">*!NindicatorManualOrderFlow</div><div class="li" style="left:0;top:180px">*!NindicatorPositionTracker</div><div class="li" style="left:0;top:192px">*!NindicatorTimeSalesSummarizer</div><div class="li" style="left:0;top:204px">*#NindicatorCLevels</div><div class="li" style="left:0;top:216px">*#NindicatorKeySupportResistance</div><div class="li" style="left:0;top:228px">*#NindicatorValueProfile</div><div class="li" style="left:0;top:240px">*&amp;NindicatorNetVolume</div><div class="li" style="left:0;top:252px">*&amp;NindicatorNetVolumeSum</div></div></div>
<div class="abs" style="left:258px;top:21px;width:16px;height:264px;background-color:#eceae6;background-image:repeating-conic-gradient(#d4d0c8 0 25%,#fff 0 50%);background-size:2px 2px"></div>
<div class="abs" style="left:258px;top:21px;width:16px;height:14px;background:#d4d0c8;border:1px solid;border-color:#d4d0c8 #404040 #404040 #d4d0c8;box-shadow:inset 1px 1px #fff,inset -1px -1px #808080"><div class="abs" style="left:3.5px;top:4px;border-left:3.5px solid transparent;border-right:3.5px solid transparent;border-bottom:4px solid #000"></div></div>
<div class="abs" style="left:258px;top:35px;width:16px;height:29px;background:#d4d0c8;border:1px solid;border-color:#d4d0c8 #404040 #404040 #d4d0c8;box-shadow:inset 1px 1px #fff,inset -1px -1px #808080"></div>
<div class="abs" style="left:258px;top:270px;width:16px;height:15px;background:#d4d0c8;border:1px solid;border-color:#d4d0c8 #404040 #404040 #d4d0c8;box-shadow:inset 1px 1px #fff,inset -1px -1px #808080"><div class="abs" style="left:3.5px;top:5px;border-left:3.5px solid transparent;border-right:3.5px solid transparent;border-top:4px solid #000"></div></div>
<div class="abs" style="left:4px;top:291px;width:271px;height:146px;background:#fff;border:1px solid;border-color:#808080 #fff #fff #808080;box-shadow:inset 1px 1px #404040;overflow:hidden"><div class="abs" style="left:2px;top:1px;width:268px;height:12px;background:#0a246a"></div><div class="abs" style="left:1px;top:1px;width:269px;height:142px;overflow:hidden"><div class="abs" style="left:6.5px;top:0px;width:320px;height:140px;transform:scaleX(0.955);transform-origin:0 0"><div class="li" style="left:0;top:0px;color:#fff">BigMO(ES 09-13 (Daily))</div><div class="li" style="left:0;top:12px;">Navi Bars(ES 09-13 (Daily),System.Drawing.Pen,System.Drawing.Pen)</div><div class="li" style="left:0;top:24px;">NaviTrend(YM 09-13 (Daily),Color [Red],10,1,7,5,14,Color [Lime])</div><div class="li" style="left:0;top:36px;">NaviTrend HiLo(ES 09-13 (Daily))</div><div class="li" style="left:0;top:48px;">Velocity Channel(ES 09-13 (Daily))</div><div class="li" style="left:0;top:60px;">BigMO(YM 09-13 (Daily))</div><div class="li" style="left:0;top:72px;">Navi Bars(YM 09-13 (Daily),System.Drawing.Pen,System.Drawing.Pen)</div><div class="li" style="left:0;top:84px;">NaviTrend HiLo(YM 09-13 (Daily))</div><div class="li" style="left:0;top:96px;">Velocity Channel(YM 09-13 (Daily))</div><div class="li" style="left:0;top:108px;">NaviTrend(ES 09-13 (Daily),Color [Red],10,1,7,5,14,Color [Lime])</div></div></div></div>
<div class="abs" style="left:29px;top:455px;width:67px;height:23px;background:#d4d0c8;border:1px solid;border-color:#fff #404040 #404040 #fff;box-shadow:inset -1px -1px #808080;text-align:center;line-height:20px;color:#a0a0a0;text-shadow:1px 1px #fff">New</div>
<div class="abs" style="left:183px;top:455px;width:68px;height:23px;background:#d4d0c8;border:1px solid;border-color:#fff #404040 #404040 #fff;box-shadow:inset -1px -1px #808080;text-align:center;line-height:20px;">Remove</div>
<div class="abs" style="left:89px;top:510px;width:81px;height:24px;border:1px solid #000"></div>
<div class="abs" style="left:90px;top:511px;width:79px;height:22px;background:#d4d0c8;border:1px solid;border-color:#fff #404040 #404040 #fff;box-shadow:inset -1px -1px #808080;text-align:center;line-height:19px;">OK</div>
<div class="abs" style="left:244px;top:510px;width:80px;height:24px;background:#d4d0c8;border:1px solid;border-color:#fff #404040 #404040 #fff;box-shadow:inset -1px -1px #808080;text-align:center;line-height:21px;">Apply</div>
<div class="abs" style="left:399px;top:510px;width:80px;height:24px;background:#d4d0c8;border:1px solid;border-color:#fff #404040 #404040 #fff;box-shadow:inset -1px -1px #808080;text-align:center;line-height:21px;">Close</div>
<div class="abs" style="left:284px;top:18px;width:279px;height:408px;background:#fff;border:1px solid;border-color:#404040 #fff #fff #404040;overflow:hidden"><div class="abs" style="left:0;top:0;width:277px;height:405px"><div class="abs" style="left:0;top:0;width:14px;height:178.6px;background:#d4d0c8"></div><div class="abs" style="left:0;top:1.0px;width:277px;height:14.8px;background:#d4d0c8;font-weight:bold"><div class="abs" style="left:2px;top:3.5px;width:9px;height:9px;border:1px solid #000;background:#fff"><div class="abs" style="left:1px;top:3px;width:5px;height:1px;background:#000"></div></div><div class="abs" style="left:17.5px;top:2px;letter-spacing:0.4px">Data</div></div><div class="abs" style="left:14px;top:15.8px;width:263px;height:14.8px;background:#fff;border-bottom:1px solid #d4d0c8"><div class="abs" style="left:0;top:0;width:117px;height:13.8px;overflow:hidden"><div class="abs" style="left:2px;top:2px;white-space:nowrap;transform:scaleX(0.95);transform-origin:0 0">Calculate on bar close</div></div><div class="abs" style="left:117px;top:0;width:1px;height:13.8px;background:#d4d0c8"></div><div class="abs" style="left:121px;top:2px;white-space:nowrap;font-weight:bold;letter-spacing:0.35px">True</div></div><div class="abs" style="left:14px;top:30.6px;width:263px;height:14.8px;background:#fff;border-bottom:1px solid #d4d0c8"><div class="abs" style="left:0;top:0;width:117px;height:13.8px;overflow:hidden"><div class="abs" style="left:2px;top:2px;white-space:nowrap;transform:scaleX(0.95);transform-origin:0 0">Input series</div></div><div class="abs" style="left:117px;top:0;width:1px;height:13.8px;background:#d4d0c8"></div><div class="abs" style="left:121px;top:2px;white-space:nowrap;font-weight:bold;letter-spacing:0.35px">ES 09-13 (Daily)</div></div><div class="abs" style="left:14px;top:45.4px;width:263px;height:14.8px;background:#fff;border-bottom:1px solid #d4d0c8"><div class="abs" style="left:0;top:0;width:117px;height:13.8px;overflow:hidden"><div class="abs" style="left:2px;top:2px;white-space:nowrap;transform:scaleX(0.95);transform-origin:0 0">Maximum bars look back</div></div><div class="abs" style="left:117px;top:0;width:1px;height:13.8px;background:#d4d0c8"></div><div class="abs" style="left:121px;top:2px;white-space:nowrap;font-weight:bold;letter-spacing:0.35px">TwoHundredFiftySix</div></div><div class="abs" style="left:0;top:60.2px;width:277px;height:14.8px;background:#d4d0c8;font-weight:bold"><div class="abs" style="left:2px;top:3.5px;width:9px;height:9px;border:1px solid #000;background:#fff"><div class="abs" style="left:1px;top:3px;width:5px;height:1px;background:#000"></div></div><div class="abs" style="left:17.5px;top:2px;letter-spacing:0.4px">Visual</div></div><div class="abs" style="left:14px;top:75.0px;width:263px;height:14.8px;background:#fff;border-bottom:1px solid #d4d0c8"><div class="abs" style="left:0;top:0;width:117px;height:13.8px;overflow:hidden"><div class="abs" style="left:2px;top:2px;white-space:nowrap;transform:scaleX(0.95);transform-origin:0 0">Auto scale</div></div><div class="abs" style="left:117px;top:0;width:1px;height:13.8px;background:#d4d0c8"></div><div class="abs" style="left:121px;top:2px;white-space:nowrap;font-weight:bold;letter-spacing:0.35px">True</div></div><div class="abs" style="left:14px;top:89.8px;width:263px;height:14.8px;background:#fff;border-bottom:1px solid #d4d0c8"><div class="abs" style="left:0;top:0;width:117px;height:13.8px;overflow:hidden"><div class="abs" style="left:2px;top:2px;white-space:nowrap;transform:scaleX(0.95);transform-origin:0 0">Displacement</div></div><div class="abs" style="left:117px;top:0;width:1px;height:13.8px;background:#d4d0c8"></div><div class="abs" style="left:121px;top:2px;white-space:nowrap;font-weight:bold;letter-spacing:0.35px">0</div></div><div class="abs" style="left:14px;top:104.6px;width:263px;height:14.8px;background:#fff;border-bottom:1px solid #d4d0c8"><div class="abs" style="left:0;top:0;width:117px;height:13.8px;overflow:hidden"><div class="abs" style="left:2px;top:2px;white-space:nowrap;transform:scaleX(0.95);transform-origin:0 0">Display in Data Box</div></div><div class="abs" style="left:117px;top:0;width:1px;height:13.8px;background:#d4d0c8"></div><div class="abs" style="left:121px;top:2px;white-space:nowrap;font-weight:bold;letter-spacing:0.35px">False</div></div><div class="abs" style="left:14px;top:119.4px;width:263px;height:14.8px;background:#fff;border-bottom:1px solid #d4d0c8"><div class="abs" style="left:0;top:0;width:117px;height:13.8px;background:#d4d0c8;overflow:hidden"><div class="abs" style="left:2px;top:2px;white-space:nowrap;transform:scaleX(0.95);transform-origin:0 0">Label</div></div><div class="abs" style="left:117px;top:0;width:1px;height:13.8px;background:#d4d0c8"></div><div class="abs" style="left:121px;top:2px;white-space:nowrap;font-weight:bold;letter-spacing:0.35px">&nbsp;BigMO</div></div><div class="abs" style="left:14px;top:134.2px;width:263px;height:14.8px;background:#fff;border-bottom:1px solid #d4d0c8"><div class="abs" style="left:0;top:0;width:117px;height:13.8px;overflow:hidden"><div class="abs" style="left:2px;top:2px;white-space:nowrap;transform:scaleX(0.95);transform-origin:0 0">Panel</div></div><div class="abs" style="left:117px;top:0;width:1px;height:13.8px;background:#d4d0c8"></div><div class="abs" style="left:121px;top:2px;white-space:nowrap;font-weight:bold;letter-spacing:0.35px">Same as input series</div></div><div class="abs" style="left:14px;top:149.0px;width:263px;height:14.8px;background:#fff;border-bottom:1px solid #d4d0c8"><div class="abs" style="left:0;top:0;width:117px;height:13.8px;overflow:hidden"><div class="abs" style="left:2px;top:2px;white-space:nowrap;transform:scaleX(0.95);transform-origin:0 0">Price marker(s)</div></div><div class="abs" style="left:117px;top:0;width:1px;height:13.8px;background:#d4d0c8"></div><div class="abs" style="left:121px;top:2px;white-space:nowrap;font-weight:bold;letter-spacing:0.35px">True</div></div><div class="abs" style="left:14px;top:163.8px;width:263px;height:14.8px;background:#fff;border-bottom:1px solid #d4d0c8"><div class="abs" style="left:0;top:0;width:117px;height:13.8px;overflow:hidden"><div class="abs" style="left:2px;top:2px;white-space:nowrap;transform:scaleX(0.95);transform-origin:0 0">Scale justification</div></div><div class="abs" style="left:117px;top:0;width:1px;height:13.8px;background:#d4d0c8"></div><div class="abs" style="left:121px;top:2px;white-space:nowrap;font-weight:bold;letter-spacing:0.35px">Right</div></div></div></div>
<div class="abs" style="left:284px;top:429px;width:279px;height:55px;border:1px solid;border-color:#808080 #fff #fff #808080"><div class="abs" style="left:4px;top:1.5px;font-weight:bold;letter-spacing:0.3px">Label</div><div class="abs" style="left:4px;top:15.5px">Big MO</div></div>
<div class="abs" style="left:552px;top:535px;width:12px;height:12px;"><svg width="12" height="12"><path d="M11 2L2 11M11 5L5 11M11 8L8 11" stroke="#fff" stroke-width="1"/><path d="M11 3L3 11M11 6L6 11M11 9L9 11" stroke="#808080" stroke-width="1"/></svg></div>
</div>
<div id="scroll" class="abs">
  <div class="abs wbtn" style="left:0;top:0;width:16px;height:22px"><div class="abs" style="left:4px;top:6px;width:0;height:0;border-top:4px solid transparent;border-bottom:4px solid transparent;border-right:4px solid #000"></div></div>
  <div class="abs wbtn" style="left:605px;top:0;width:641px;height:22px"></div>
  <div class="abs wbtn" style="left:1246px;top:0;width:16px;height:22px"><div class="abs" style="left:6px;top:6px;width:0;height:0;border-top:4px solid transparent;border-bottom:4px solid transparent;border-left:4px solid #000"></div></div>
</div>
<div id="task" class="abs">
<div class="abs" style="left:0;top:1px;width:1262px;height:1px;background:#fff"></div>
<div class="tb" style="left:2px;width:51px;font-weight:bold;font-size:11.5px;padding-left:19px"><svg class="abs" style="left:3px;top:1px" width="17" height="16"><path d="M2 3 Q5 1 8 3 L7 8 Q4 6 1 8 Z" fill="#e8501a"/><path d="M9 3 Q12 1 15 3 L14 8 Q11 6 8 8 Z" fill="#5ab02a"/><path d="M1 9 Q4 7 7 9 L6 14 Q3 12 0 14 Z" fill="#2a7ae0"/><path d="M8 9 Q11 7 14 9 L13 14 Q10 12 7 14 Z" fill="#f0c020"/></svg>Пуск</div>
<div class="tb" style="left:57px;width:158px;"><svg class="abs" style="left:4px;top:1px" width="16" height="16"><rect x="2" y="2" width="10" height="12" fill="#e8f0fa" stroke="#2a5ab0"/><path d="M4 9 L6 12 L10 5" stroke="#e0a020" stroke-width="1.5" fill="none"/><path d="M12 6 L15 10" stroke="#444" stroke-width="1.5"/></svg>Панель управления</div>
<div class="tb" style="left:218px;width:157px;"><svg class="abs" style="left:5px;top:1px" width="16" height="16"><circle cx="8" cy="8" r="7" fill="#4a9ae0" stroke="#2a6ab0"/><path d="M4 9 Q8 2 12 6" stroke="#40c040" stroke-width="2" fill="none"/><text x="5" y="12" font-size="8" fill="#fff" font-weight="bold">C</text></svg>Total Commander 7.50 p...</div>
<div class="tb" style="left:378px;width:158px;"><svg class="abs" style="left:5px;top:2px" width="16" height="14"><path d="M3 11 C1 7 3 2 7 3 C5 5 5 8 7 11" fill="#c04040"/><path d="M7 4 L10 11 L14 3" stroke="#d02020" stroke-width="2" fill="none"/><path d="M4 10 C3 7 4 4 6 4" stroke="#888" stroke-width="1" fill="none"/></svg>NinjaTrader 7.0.1000.14...</div>
<div class="tb" style="left:539px;width:158px;"><svg class="abs" style="left:5px;top:2px" width="16" height="14"><path d="M3 11 C1 7 3 2 7 3 C5 5 5 8 7 11" fill="#c04040"/><path d="M7 4 L10 11 L14 3" stroke="#d02020" stroke-width="2" fill="none"/><path d="M4 10 C3 7 4 4 6 4" stroke="#888" stroke-width="1" fill="none"/></svg>Control Center - Untitled1</div>
<div class="tb" style="left:700px;width:158px;"><svg class="abs" style="left:5px;top:2px" width="16" height="14"><rect x="0.5" y="0.5" width="14" height="13" fill="#fff" stroke="#8aa"/><path d="M1 12 L5 7 L9 8 L14 2" stroke="#1c5cc8" stroke-width="1.5" fill="none"/><path d="M1 8 L5 4 L9 6 L14 1" stroke="#30b030" stroke-width="1.3" fill="none"/></svg>ES 09-13 (Daily) / YM 09-...</div>
<div class="tb" style="left:861px;width:157px;border-color:#404040 #fff #fff #404040;box-shadow:inset 1px 1px #808080;background-color:#e8e6e2;background-image:repeating-conic-gradient(#d4d0c8 0 25%,#fff 0 50%);background-size:2px 2px;font-weight:bold;font-size:12px;"><svg class="abs" style="left:5px;top:2px" width="16" height="14"><path d="M3 11 C1 7 3 2 7 3 C5 5 5 8 7 11" fill="#c04040"/><path d="M7 4 L10 11 L14 3" stroke="#d02020" stroke-width="2" fill="none"/><path d="M4 10 C3 7 4 4 6 4" stroke="#888" stroke-width="1" fill="none"/></svg>Indicators</div>
<div class="abs" style="left:1165px;top:7px;width:12px;height:15px;background:#0a246a;color:#fff;font-size:11px;line-height:15px;overflow:hidden;letter-spacing:-1px">EN</div>
<div class="abs" style="left:1181px;top:4px;width:79px;height:21px;border:1px solid;border-color:#808080 #fff #fff #808080"></div>
<svg class="abs" style="left:1184px;top:6px" width="40" height="18"><circle cx="8" cy="8" r="5.5" fill="none" stroke="#555" stroke-width="1.8"/><circle cx="7" cy="7" r="2.5" fill="none" stroke="#888" stroke-width="1.2"/><path d="M10 14 L15 10 M11 16 L16 12" stroke="#8a8ae0" stroke-width="1"/><path d="M21 3 L27 1 L33 3 L33 9 Q33 14 27 17 Q21 14 21 9 Z" fill="#d02020" stroke="#6a7a9a" stroke-width="1.3"/><path d="M25 6 L29 10 M29 6 L25 10" stroke="#fff" stroke-width="1.5"/></svg>
<div class="abs" style="left:1223px;top:8px;font-size:11px">11:33</div>
</div>
</body></html>
